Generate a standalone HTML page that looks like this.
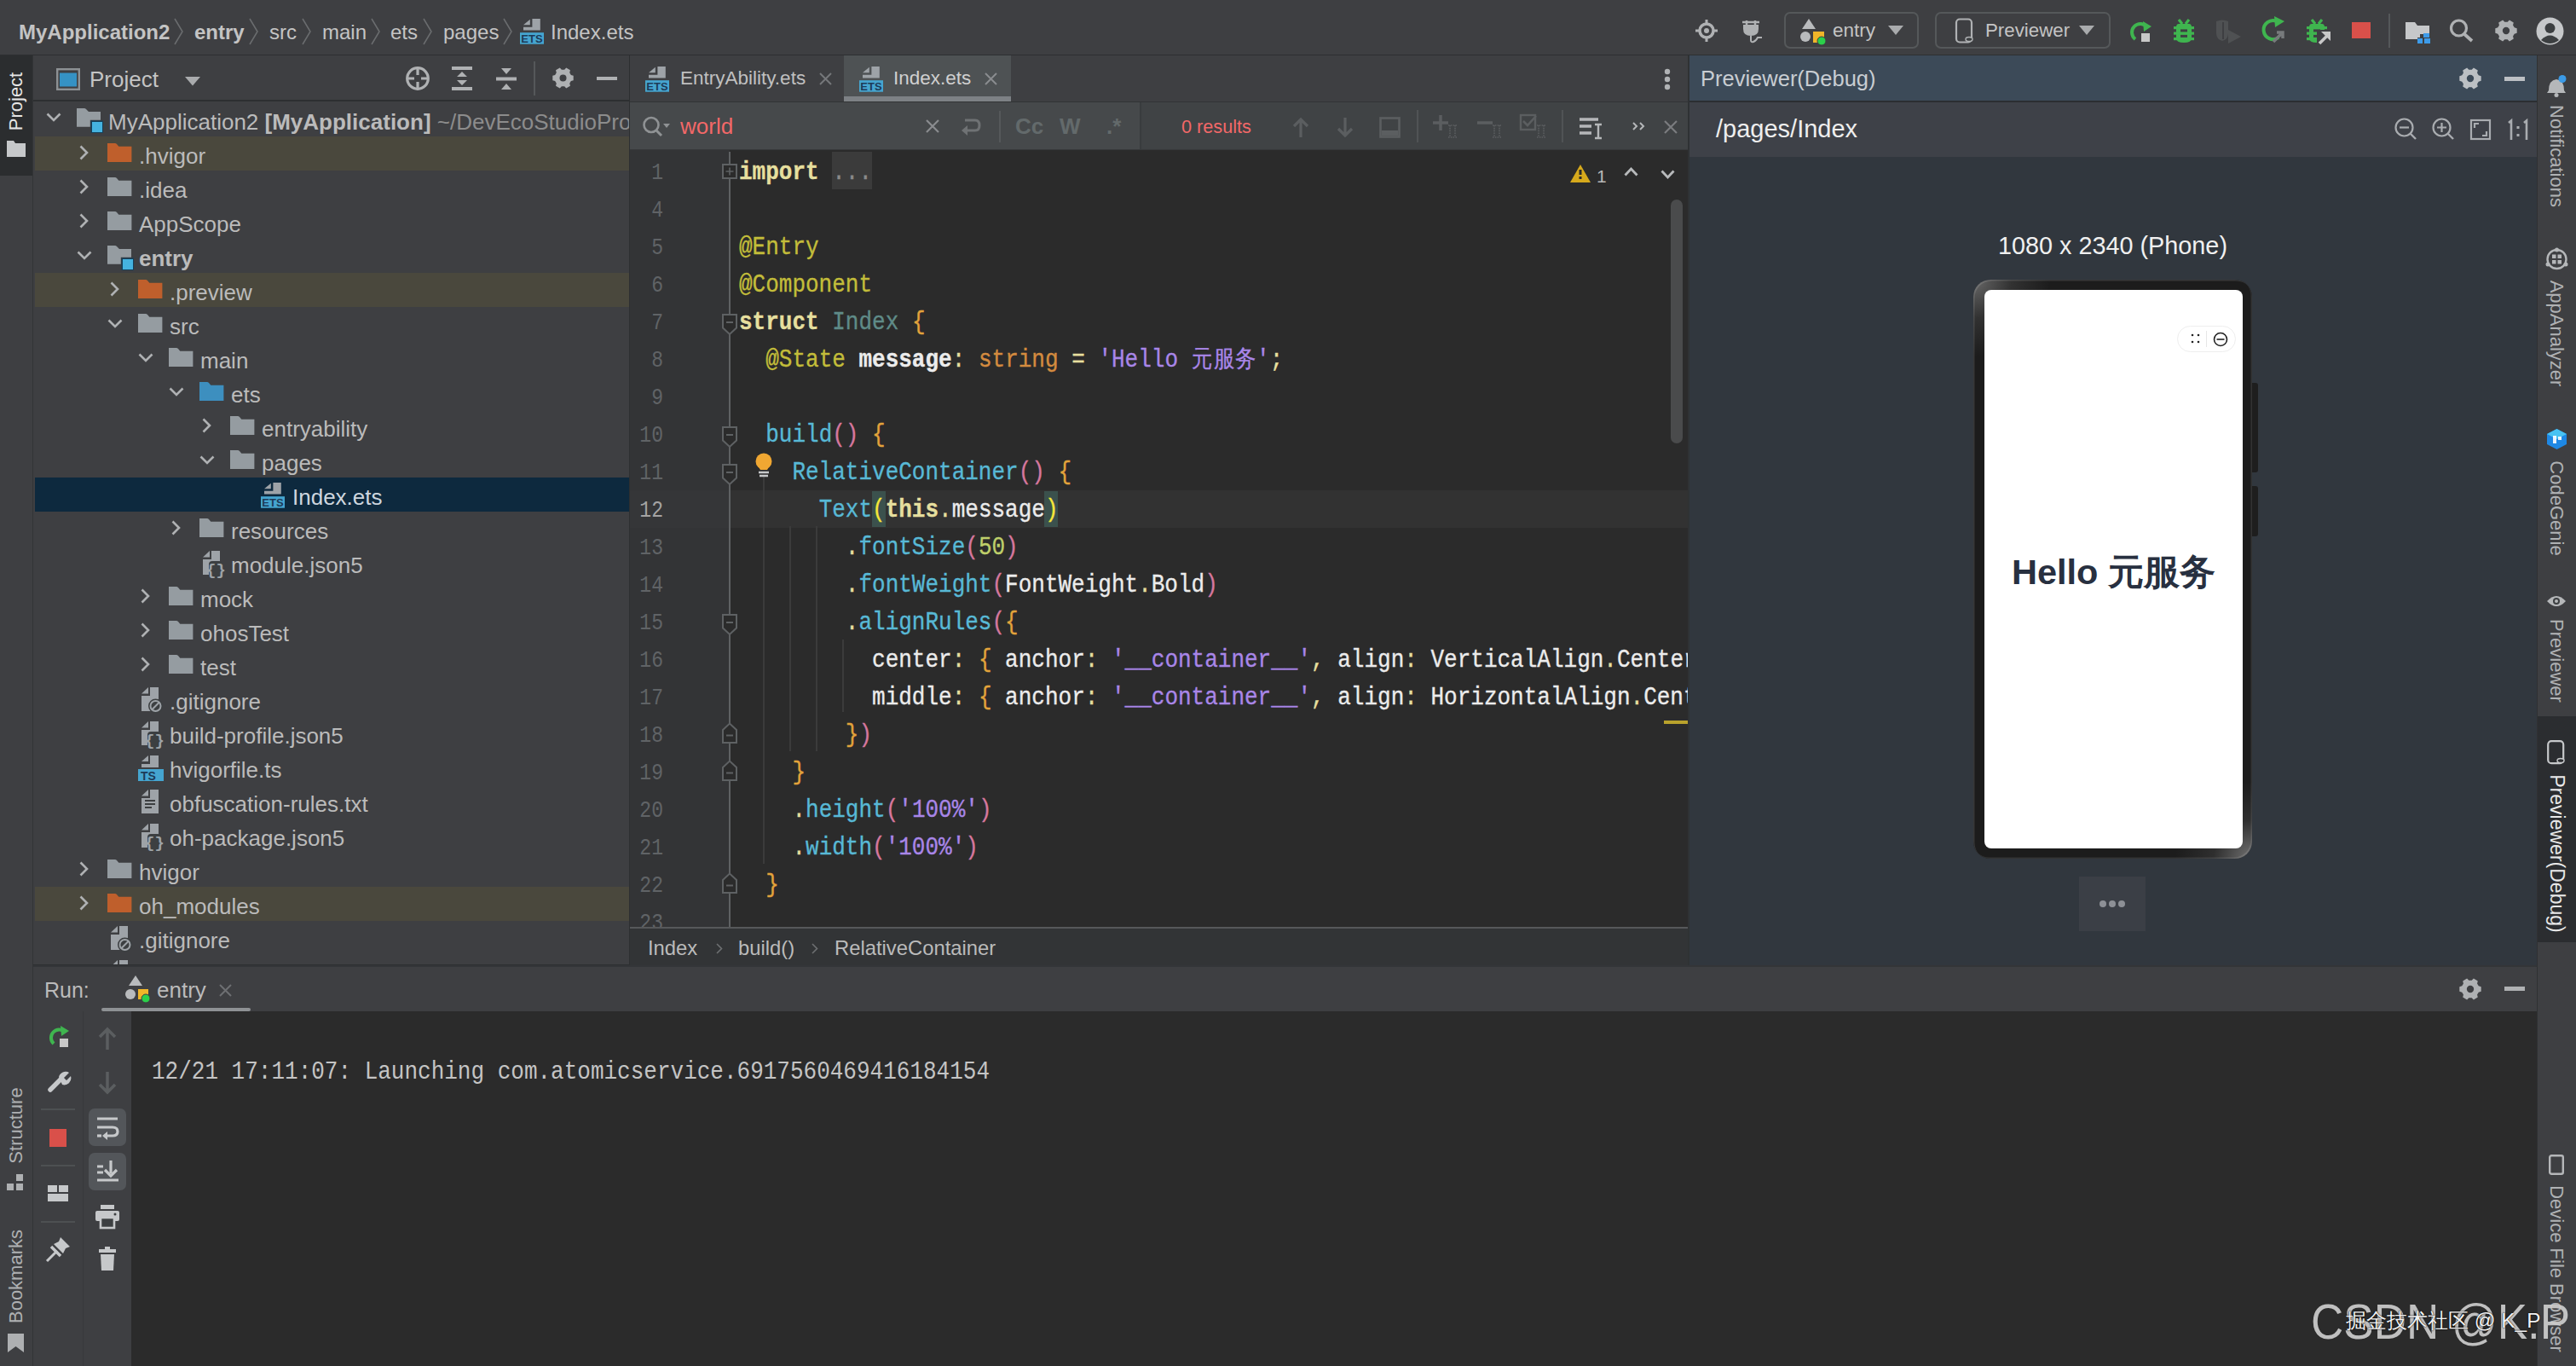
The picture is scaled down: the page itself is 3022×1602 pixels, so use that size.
<!DOCTYPE html><html><head><meta charset="utf-8"><style>html,body{margin:0;padding:0;width:3022px;height:1602px;overflow:hidden;background:#3c3f41}div{box-sizing:border-box}</style></head><body>
<div style="position:absolute;left:0px;top:0px;width:3022px;height:64px;background:#3e3f42;"></div>
<div style="position:absolute;left:0px;top:64px;width:3022px;height:2px;background:#2d2f31;"></div>
<div style="position:absolute;left:22px;top:25.68px;font-family:'Liberation Sans', sans-serif;font-size:24px;line-height:24px;color:#c4c4c4;font-weight:700;white-space:pre;">MyApplication2</div>
<div style="position:absolute;left:228px;top:25.68px;font-family:'Liberation Sans', sans-serif;font-size:24px;line-height:24px;color:#c4c4c4;font-weight:700;white-space:pre;">entry</div>
<div style="position:absolute;left:316px;top:25.68px;font-family:'Liberation Sans', sans-serif;font-size:24px;line-height:24px;color:#c4c4c4;font-weight:400;white-space:pre;">src</div>
<div style="position:absolute;left:378px;top:25.68px;font-family:'Liberation Sans', sans-serif;font-size:24px;line-height:24px;color:#c4c4c4;font-weight:400;white-space:pre;">main</div>
<div style="position:absolute;left:458px;top:25.68px;font-family:'Liberation Sans', sans-serif;font-size:24px;line-height:24px;color:#c4c4c4;font-weight:400;white-space:pre;">ets</div>
<div style="position:absolute;left:520px;top:25.68px;font-family:'Liberation Sans', sans-serif;font-size:24px;line-height:24px;color:#c4c4c4;font-weight:400;white-space:pre;">pages</div>
<div style="position:absolute;left:646px;top:25.68px;font-family:'Liberation Sans', sans-serif;font-size:24px;line-height:24px;color:#c4c4c4;font-weight:400;white-space:pre;">Index.ets</div>
<svg style="position:absolute;left:204px;top:21px;overflow:visible;" width="12" height="32" viewBox="0 0 12 32"><path d="M1 1 L10 16 L1 31" stroke="#6a6c6e" stroke-width="1.6" fill="none"/></svg>
<svg style="position:absolute;left:292px;top:21px;overflow:visible;" width="12" height="32" viewBox="0 0 12 32"><path d="M1 1 L10 16 L1 31" stroke="#6a6c6e" stroke-width="1.6" fill="none"/></svg>
<svg style="position:absolute;left:354px;top:21px;overflow:visible;" width="12" height="32" viewBox="0 0 12 32"><path d="M1 1 L10 16 L1 31" stroke="#6a6c6e" stroke-width="1.6" fill="none"/></svg>
<svg style="position:absolute;left:435px;top:21px;overflow:visible;" width="12" height="32" viewBox="0 0 12 32"><path d="M1 1 L10 16 L1 31" stroke="#6a6c6e" stroke-width="1.6" fill="none"/></svg>
<svg style="position:absolute;left:496px;top:21px;overflow:visible;" width="12" height="32" viewBox="0 0 12 32"><path d="M1 1 L10 16 L1 31" stroke="#6a6c6e" stroke-width="1.6" fill="none"/></svg>
<svg style="position:absolute;left:590px;top:21px;overflow:visible;" width="12" height="32" viewBox="0 0 12 32"><path d="M1 1 L10 16 L1 31" stroke="#6a6c6e" stroke-width="1.6" fill="none"/></svg>
<svg style="position:absolute;left:610px;top:22px;overflow:visible;" width="30" height="31" viewBox="0 0 30 31"><path d="M4 7.3 L11.8 0.7 V7.3 Z" fill="#9ea3a8"/><path d="M14.4 0 H23.8 V13.5 H4 V9.8 H14.4 Z" fill="#9ea3a8"/><rect x="0" y="16.2" width="28" height="13.5" fill="#45a5d0"/><text x="14" y="28.3" font-family="Liberation Sans" font-size="13" font-weight="700" fill="#1d3b58" text-anchor="middle">ETS</text></svg>
<svg style="position:absolute;left:1988px;top:22px;overflow:visible;" width="28" height="28" viewBox="0 0 28 28"><circle cx="14" cy="14" r="8" stroke="#afb1b3" stroke-width="3.5" fill="none"/><circle cx="14" cy="14" r="3" fill="#afb1b3"/><path d="M14 1 V6 M14 22 V27 M1 14 H6 M22 14 H27" stroke="#afb1b3" stroke-width="3"/></svg>
<svg style="position:absolute;left:2040px;top:22px;overflow:visible;" width="28" height="28" viewBox="0 0 28 28"><path d="M4 4 H24 M9 2 V8 M19 2 V8" stroke="#afb1b3" stroke-width="2.5"/><path d="M5 7 H23 V12 Q23 20 14 20 Q5 20 5 12 Z" fill="#afb1b3"/><path d="M14 20 V25 Q14 28 17 27 Q20 26 22 22 H27" stroke="#afb1b3" stroke-width="2" fill="none"/></svg>
<div style="position:absolute;left:2093px;top:14px;width:158px;height:43px;background:transparent;border:2px solid #55585a;border-radius:7px;"></div>
<svg style="position:absolute;left:2111px;top:20px;overflow:visible;" width="34" height="34" viewBox="0 0 34 34"><path d="M11 2 L19 14 L3 14 Z" fill="#b9bbbd"/><circle cx="7" cy="23" r="6" fill="#b9bbbd"/><rect x="16" y="17" width="13" height="13" fill="#f0b629"/><circle cx="26" cy="28" r="5" fill="#2bd04a" stroke="#3c3f41" stroke-width="1"/></svg>
<div style="position:absolute;left:2150px;top:24.95px;font-family:'Liberation Sans', sans-serif;font-size:22.5px;line-height:22.5px;color:#c4c4c4;font-weight:400;white-space:pre;">entry</div>
<svg style="position:absolute;left:2215px;top:30px;overflow:visible;" width="18" height="12" viewBox="0 0 18 12"><path d="M0 0 H18 L9 11 Z" fill="#a9abad"/></svg>
<div style="position:absolute;left:2270px;top:14px;width:206px;height:43px;background:transparent;border:2px solid #55585a;border-radius:7px;"></div>
<svg style="position:absolute;left:2293px;top:21px;overflow:visible;" width="24" height="30" viewBox="0 0 24 30"><rect x="2" y="1.5" width="18" height="27" rx="4" stroke="#afb1b3" stroke-width="2.2" fill="none"/><ellipse cx="17" cy="25" rx="4" ry="2.5" stroke="#afb1b3" stroke-width="1.4" fill="#3c3f41"/></svg>
<div style="position:absolute;left:2329px;top:25.12px;font-family:'Liberation Sans', sans-serif;font-size:22.3px;line-height:22.3px;color:#c4c4c4;font-weight:400;white-space:pre;">Previewer</div>
<svg style="position:absolute;left:2439px;top:30px;overflow:visible;" width="18" height="12" viewBox="0 0 18 12"><path d="M0 0 H18 L9 11 Z" fill="#a9abad"/></svg>
<svg style="position:absolute;left:2497px;top:22px;overflow:visible;" width="30" height="30" viewBox="0 0 30 30"><path d="M8 24 A10 10 0 1 1 22 10" stroke="#3fb54f" stroke-width="4" fill="none"/><path d="M17 3 L27 9 L18 15 Z" fill="#3fb54f"/><rect x="15" y="17" width="10" height="10" fill="#c8c8c8"/></svg>
<svg style="position:absolute;left:2550px;top:22px;overflow:visible;" width="30" height="34" viewBox="0 0 30 34"><path d="M6 1 L10 6 M18 1 L14 6" stroke="#3fb54f" stroke-width="3.2"/><path d="M6 6 H18 Q21 6 21 10 V23 Q21 28 12 28 Q3 28 3 23 V10 Q3 6 6 6 Z" fill="#3fb54f"/><rect x="0" y="9" width="24" height="3.2" fill="#3fb54f"/><rect x="0" y="15.5" width="24" height="3.2" fill="#3fb54f"/><rect x="0" y="22" width="24" height="3.2" fill="#3fb54f"/><rect x="8" y="12.4" width="8" height="3" fill="#3e3f42"/><rect x="8" y="18.9" width="8" height="3" fill="#3e3f42"/></svg>
<svg style="position:absolute;left:2599px;top:22px;overflow:visible;" width="34" height="30" viewBox="0 0 34 30"><path d="M1 3 Q8 0 15 3 V17 Q15 24 8 26 Q1 24 1 17 Z" fill="#4f5153"/><path d="M9 4 V24" stroke="#3e3f42" stroke-width="2"/><path d="M15 13 L30 21 L15 29 Z" fill="#4f5153"/></svg>
<svg style="position:absolute;left:2651px;top:19px;overflow:visible;" width="32" height="32" viewBox="0 0 32 32"><path d="M22 25 A11 11 0 1 1 20 6" stroke="#3fb54f" stroke-width="4" fill="none"/><path d="M17 0 L29 6 L18 13 Z" fill="#3fb54f"/><path d="M16 30 L27 19 M20 19 H27 V26" stroke="#777a7c" stroke-width="3.5" fill="none"/></svg>
<svg style="position:absolute;left:2706px;top:22px;overflow:visible;" width="30" height="34" viewBox="0 0 30 34"><path d="M6 1 L10 6 M18 1 L14 6" stroke="#3fb54f" stroke-width="3.2"/><path d="M6 6 H18 Q21 6 21 10 V23 Q21 28 12 28 Q3 28 3 23 V10 Q3 6 6 6 Z" fill="#3fb54f"/><rect x="0" y="9" width="24" height="3.2" fill="#3fb54f"/><rect x="0" y="15.5" width="24" height="3.2" fill="#3fb54f"/><rect x="0" y="22" width="24" height="3.2" fill="#3fb54f"/><rect x="8" y="12.4" width="8" height="3" fill="#3e3f42"/><rect x="8" y="18.9" width="8" height="3" fill="#3e3f42"/><path d="M12 13 H29 V31 H12 Z" fill="#3e3f42"/><path d="M15 29 L25 19" stroke="#c8c8c8" stroke-width="3.6"/><path d="M17 15 H28 V26 Z" fill="#c8c8c8"/></svg>
<div style="position:absolute;left:2759px;top:26px;width:22px;height:19px;background:#d9504a;"></div>
<div style="position:absolute;left:2802px;top:16px;width:2px;height:40px;background:#55585a;"></div>
<svg style="position:absolute;left:2822px;top:26px;overflow:visible;" width="30" height="25" viewBox="0 0 30 25"><path d="M0 0 H11 L14 4 H28 V18 H14 V20 H0 Z" fill="#c6c8ca"/><rect x="17" y="14" width="13" height="11" fill="#3c3f41"/><rect x="21" y="13" width="7" height="5" fill="#3d9be9"/><rect x="14" y="19" width="6" height="6" fill="#3d9be9"/><rect x="22" y="19" width="7" height="6" fill="#3d9be9"/></svg>
<svg style="position:absolute;left:2873px;top:22px;overflow:visible;" width="30" height="28" viewBox="0 0 30 28"><circle cx="11.5" cy="11" r="9" stroke="#afb1b3" stroke-width="3.2" fill="none"/><path d="M18 18 L27 26" stroke="#afb1b3" stroke-width="3.8"/></svg>
<svg style="position:absolute;left:2927px;top:23px;overflow:visible;" width="26" height="26" viewBox="0 0 26 26"><path d="M22.73 9.34 L25.69 10.16 L25.69 15.84 L22.73 16.66 L21.04 19.60 L21.80 22.57 L16.89 25.41 L14.69 23.26 L11.31 23.26 L9.11 25.41 L4.20 22.57 L4.96 19.60 L3.27 16.66 L0.31 15.84 L0.31 10.16 L3.27 9.34 L4.96 6.40 L4.20 3.43 L9.11 0.59 L11.31 2.74 L14.69 2.74 L16.89 0.59 L21.80 3.43 L21.04 6.40 Z" fill="#afb1b3"/><circle cx="13.0" cy="13.0" r="4.16" fill="#3e3f42"/></svg>
<svg style="position:absolute;left:2975px;top:20px;overflow:visible;" width="33" height="33" viewBox="0 0 33 33"><circle cx="16.5" cy="16.5" r="16" fill="#c6c8ca"/><circle cx="16.5" cy="13" r="6" fill="#3c3f41"/><path d="M6 27 Q16.5 16 27 27 Q22 31 16.5 31 Q11 31 6 27 Z" fill="#3c3f41"/></svg>
<div style="position:absolute;left:0px;top:65px;width:38px;height:1537px;background:#3e3f42;"></div>
<div style="position:absolute;left:38px;top:65px;width:1px;height:1537px;background:#323436;"></div>
<div style="position:absolute;left:0px;top:65px;width:38px;height:141px;background:#2b2d2f;"></div>
<div style="position:absolute;left:19px;top:119px;transform:translate(-50%,-50%) rotate(-90deg);font-family:'Liberation Sans', sans-serif;font-size:22px;line-height:22px;color:#e6e6e6;font-weight:400;white-space:pre">Project</div>
<svg style="position:absolute;left:8px;top:165px;overflow:visible;" width="22" height="19" viewBox="0 0 22 19"><path d="M0 0 H8 L10 3 H22 V19 H0 Z" fill="#c6c8ca"/></svg>
<div style="position:absolute;left:19px;top:1320px;transform:translate(-50%,-50%) rotate(-90deg);font-family:'Liberation Sans', sans-serif;font-size:22px;line-height:22px;color:#aeb0b2;font-weight:400;white-space:pre">Structure</div>
<svg style="position:absolute;left:8px;top:1377px;overflow:visible;" width="22" height="20" viewBox="0 0 22 20"><rect x="0" y="11" width="8" height="8" fill="#aeb0b2"/><rect x="11" y="11" width="8" height="8" fill="#aeb0b2"/><rect x="11" y="0" width="8" height="8" fill="#aeb0b2"/></svg>
<div style="position:absolute;left:19px;top:1497px;transform:translate(-50%,-50%) rotate(-90deg);font-family:'Liberation Sans', sans-serif;font-size:22px;line-height:22px;color:#aeb0b2;font-weight:400;white-space:pre">Bookmarks</div>
<svg style="position:absolute;left:9px;top:1564px;overflow:visible;" width="19" height="22" viewBox="0 0 19 22"><path d="M0 0 H19 V22 L9.5 15 L0 22 Z" fill="#aeb0b2"/></svg>
<div style="position:absolute;left:39px;top:65px;width:699px;height:1068px;background:#3e3f42;"></div>
<svg style="position:absolute;left:66px;top:80px;overflow:visible;" width="28" height="26" viewBox="0 0 28 26"><rect x="1.2" y="1.2" width="25.6" height="23.6" stroke="#8d9194" stroke-width="2.4" fill="none"/><rect x="4" y="5.5" width="20" height="16" fill="#3592c4"/></svg>
<div style="position:absolute;left:105px;top:79.99px;font-family:'Liberation Sans', sans-serif;font-size:26px;line-height:26px;color:#c4c4c4;font-weight:400;white-space:pre;">Project</div>
<svg style="position:absolute;left:217px;top:90px;overflow:visible;" width="18" height="11" viewBox="0 0 18 11"><path d="M0 0 H18 L9 10.5 Z" fill="#a9abad"/></svg>
<svg style="position:absolute;left:476px;top:78px;overflow:visible;" width="28" height="28" viewBox="0 0 28 28"><circle cx="14" cy="14" r="12.3" stroke="#afb1b3" stroke-width="3.2" fill="none"/><path d="M14 2 V10 M14 18 V26 M2 14 H10 M18 14 H26" stroke="#afb1b3" stroke-width="3.2"/></svg>
<svg style="position:absolute;left:530px;top:78px;overflow:visible;" width="24" height="28" viewBox="0 0 24 28"><rect x="0" y="0" width="24" height="4" fill="#afb1b3"/><rect x="0" y="24" width="24" height="4" fill="#afb1b3"/><path d="M6 12 L12 6 L18 12 Z M6 16 L12 22 L18 16 Z" fill="#afb1b3"/></svg>
<svg style="position:absolute;left:582px;top:80px;overflow:visible;" width="24" height="25" viewBox="0 0 24 25"><rect x="0" y="10.5" width="24" height="4" fill="#afb1b3"/><path d="M6 0 H18 L12 7 Z M6 25 H18 L12 18 Z" fill="#afb1b3"/></svg>
<div style="position:absolute;left:626px;top:72px;width:2px;height:40px;background:#55585a;"></div>
<svg style="position:absolute;left:648px;top:79px;overflow:visible;" width="25" height="25" viewBox="0 0 25 25"><path d="M21.86 8.98 L24.70 9.77 L24.70 15.23 L21.86 16.02 L20.23 18.84 L20.96 21.70 L16.24 24.43 L14.13 22.37 L10.87 22.37 L8.76 24.43 L4.04 21.70 L4.77 18.84 L3.14 16.02 L0.30 15.23 L0.30 9.77 L3.14 8.98 L4.77 6.16 L4.04 3.30 L8.76 0.57 L10.87 2.63 L14.13 2.63 L16.24 0.57 L20.96 3.30 L20.23 6.16 Z" fill="#afb1b3"/><circle cx="12.5" cy="12.5" r="4.00" fill="#3e3f42"/></svg>
<div style="position:absolute;left:700px;top:90px;width:24px;height:4px;background:#afb1b3;"></div>
<div style="position:absolute;left:39px;top:117px;width:699px;height:2px;background:#2d2f31;"></div>
<div style="position:absolute;left:39px;top:119px;width:699px;height:1013px;overflow:hidden">
<svg style="position:absolute;left:15px;top:13px" width="18" height="11"><path d="M1.5 1.5 L9 9 L16.5 1.5" stroke="#afb1b3" stroke-width="2.6" fill="none"/></svg>
<svg style="position:absolute;left:51px;top:8px" width="32" height="30"><path d="M0 0 H9 Q10 0 11 1 L14 4 H28 V13.7 H15.8 V21.8 H0 Z" fill="#959ca1"/><rect x="16.5" y="14.5" width="14.5" height="14.5" fill="#15405a"/><rect x="18" y="16" width="12" height="12" fill="#45b3e0"/></svg>
<div style="position:absolute;left:88px;top:10.99px;font-family:'Liberation Sans', sans-serif;font-size:26px;line-height:26px;white-space:pre;color:#bbbbbb"><span style="font-weight:400;color:#bbbbbb">MyApplication2 </span><span style="font-weight:700;color:#bbbbbb">[MyApplication]</span><span style="font-weight:400;color:#8c8c8c"> ~/DevEcoStudioProjects/MyApplication2</span></div>
<div style="position:absolute;left:2px;top:41px;width:697px;height:40px;background:#4a483d"></div>
<svg style="position:absolute;left:54px;top:51px" width="11" height="18"><path d="M1.5 1.5 L9 9 L1.5 16.5" stroke="#afb1b3" stroke-width="2.6" fill="none"/></svg>
<svg style="position:absolute;left:87px;top:49px" width="30" height="24"><path d="M0 0 H9 Q10 0 11 1 L13.3 3.8 H28.4 V22 H0 Z" fill="#bf5f2c"/></svg>
<div style="position:absolute;left:124px;top:50.99px;font-family:'Liberation Sans', sans-serif;font-size:26px;line-height:26px;white-space:pre;color:#bbbbbb"><span style="font-weight:400;color:#bbbbbb">.hvigor</span></div>
<svg style="position:absolute;left:54px;top:91px" width="11" height="18"><path d="M1.5 1.5 L9 9 L1.5 16.5" stroke="#afb1b3" stroke-width="2.6" fill="none"/></svg>
<svg style="position:absolute;left:87px;top:89px" width="30" height="24"><path d="M0 0 H9 Q10 0 11 1 L13.3 3.8 H28.4 V22 H0 Z" fill="#959ca1"/></svg>
<div style="position:absolute;left:124px;top:90.99px;font-family:'Liberation Sans', sans-serif;font-size:26px;line-height:26px;white-space:pre;color:#bbbbbb"><span style="font-weight:400;color:#bbbbbb">.idea</span></div>
<svg style="position:absolute;left:54px;top:131px" width="11" height="18"><path d="M1.5 1.5 L9 9 L1.5 16.5" stroke="#afb1b3" stroke-width="2.6" fill="none"/></svg>
<svg style="position:absolute;left:87px;top:129px" width="30" height="24"><path d="M0 0 H9 Q10 0 11 1 L13.3 3.8 H28.4 V22 H0 Z" fill="#959ca1"/></svg>
<div style="position:absolute;left:124px;top:130.99px;font-family:'Liberation Sans', sans-serif;font-size:26px;line-height:26px;white-space:pre;color:#bbbbbb"><span style="font-weight:400;color:#bbbbbb">AppScope</span></div>
<svg style="position:absolute;left:51px;top:175px" width="18" height="11"><path d="M1.5 1.5 L9 9 L16.5 1.5" stroke="#afb1b3" stroke-width="2.6" fill="none"/></svg>
<svg style="position:absolute;left:87px;top:169px" width="32" height="30"><path d="M0 0 H9 Q10 0 11 1 L14 4 H28 V13.7 H15.8 V21.8 H0 Z" fill="#959ca1"/><rect x="16.5" y="14.5" width="14.5" height="14.5" fill="#15405a"/><rect x="18" y="16" width="12" height="12" fill="#45b3e0"/></svg>
<div style="position:absolute;left:124px;top:170.99px;font-family:'Liberation Sans', sans-serif;font-size:26px;line-height:26px;white-space:pre;color:#bbbbbb"><span style="font-weight:700;color:#bbbbbb">entry</span></div>
<div style="position:absolute;left:2px;top:201px;width:697px;height:40px;background:#4a483d"></div>
<svg style="position:absolute;left:90px;top:211px" width="11" height="18"><path d="M1.5 1.5 L9 9 L1.5 16.5" stroke="#afb1b3" stroke-width="2.6" fill="none"/></svg>
<svg style="position:absolute;left:123px;top:209px" width="30" height="24"><path d="M0 0 H9 Q10 0 11 1 L13.3 3.8 H28.4 V22 H0 Z" fill="#bf5f2c"/></svg>
<div style="position:absolute;left:160px;top:210.99px;font-family:'Liberation Sans', sans-serif;font-size:26px;line-height:26px;white-space:pre;color:#bbbbbb"><span style="font-weight:400;color:#bbbbbb">.preview</span></div>
<svg style="position:absolute;left:87px;top:255px" width="18" height="11"><path d="M1.5 1.5 L9 9 L16.5 1.5" stroke="#afb1b3" stroke-width="2.6" fill="none"/></svg>
<svg style="position:absolute;left:123px;top:249px" width="30" height="24"><path d="M0 0 H9 Q10 0 11 1 L13.3 3.8 H28.4 V22 H0 Z" fill="#959ca1"/></svg>
<div style="position:absolute;left:160px;top:250.99px;font-family:'Liberation Sans', sans-serif;font-size:26px;line-height:26px;white-space:pre;color:#bbbbbb"><span style="font-weight:400;color:#bbbbbb">src</span></div>
<svg style="position:absolute;left:123px;top:295px" width="18" height="11"><path d="M1.5 1.5 L9 9 L16.5 1.5" stroke="#afb1b3" stroke-width="2.6" fill="none"/></svg>
<svg style="position:absolute;left:159px;top:289px" width="30" height="24"><path d="M0 0 H9 Q10 0 11 1 L13.3 3.8 H28.4 V22 H0 Z" fill="#959ca1"/></svg>
<div style="position:absolute;left:196px;top:290.99px;font-family:'Liberation Sans', sans-serif;font-size:26px;line-height:26px;white-space:pre;color:#bbbbbb"><span style="font-weight:400;color:#bbbbbb">main</span></div>
<svg style="position:absolute;left:159px;top:335px" width="18" height="11"><path d="M1.5 1.5 L9 9 L16.5 1.5" stroke="#afb1b3" stroke-width="2.6" fill="none"/></svg>
<svg style="position:absolute;left:195px;top:329px" width="30" height="24"><path d="M0 0 H9 Q10 0 11 1 L13.3 3.8 H28.4 V22 H0 Z" fill="#3d8fbf"/></svg>
<div style="position:absolute;left:232px;top:330.99px;font-family:'Liberation Sans', sans-serif;font-size:26px;line-height:26px;white-space:pre;color:#bbbbbb"><span style="font-weight:400;color:#bbbbbb">ets</span></div>
<svg style="position:absolute;left:198px;top:371px" width="11" height="18"><path d="M1.5 1.5 L9 9 L1.5 16.5" stroke="#afb1b3" stroke-width="2.6" fill="none"/></svg>
<svg style="position:absolute;left:231px;top:369px" width="30" height="24"><path d="M0 0 H9 Q10 0 11 1 L13.3 3.8 H28.4 V22 H0 Z" fill="#959ca1"/></svg>
<div style="position:absolute;left:268px;top:370.99px;font-family:'Liberation Sans', sans-serif;font-size:26px;line-height:26px;white-space:pre;color:#bbbbbb"><span style="font-weight:400;color:#bbbbbb">entryability</span></div>
<svg style="position:absolute;left:195px;top:415px" width="18" height="11"><path d="M1.5 1.5 L9 9 L16.5 1.5" stroke="#afb1b3" stroke-width="2.6" fill="none"/></svg>
<svg style="position:absolute;left:231px;top:409px" width="30" height="24"><path d="M0 0 H9 Q10 0 11 1 L13.3 3.8 H28.4 V22 H0 Z" fill="#959ca1"/></svg>
<div style="position:absolute;left:268px;top:410.99px;font-family:'Liberation Sans', sans-serif;font-size:26px;line-height:26px;white-space:pre;color:#bbbbbb"><span style="font-weight:400;color:#bbbbbb">pages</span></div>
<div style="position:absolute;left:2px;top:441px;width:697px;height:40px;background:#0d293e"></div>
<svg style="position:absolute;left:267px;top:447px" width="30" height="31"><path d="M4 7.3 L11.8 0.7 V7.3 Z" fill="#9ea3a8"/><path d="M14.4 0 H23.8 V13.5 H4 V9.8 H14.4 Z" fill="#9ea3a8"/><rect x="0" y="16.2" width="28" height="13.5" fill="#45a5d0"/><text x="14" y="28.3" font-family="Liberation Sans" font-size="13" font-weight="700" fill="#1d3b58" text-anchor="middle">ETS</text></svg>
<div style="position:absolute;left:304px;top:450.99px;font-family:'Liberation Sans', sans-serif;font-size:26px;line-height:26px;white-space:pre;color:#bbbbbb"><span style="font-weight:400;color:#cdd6df">Index.ets</span></div>
<svg style="position:absolute;left:162px;top:491px" width="11" height="18"><path d="M1.5 1.5 L9 9 L1.5 16.5" stroke="#afb1b3" stroke-width="2.6" fill="none"/></svg>
<svg style="position:absolute;left:195px;top:489px" width="30" height="24"><path d="M0 0 H9 Q10 0 11 1 L13.3 3.8 H28.4 V22 H0 Z" fill="#959ca1"/></svg>
<div style="position:absolute;left:232px;top:490.99px;font-family:'Liberation Sans', sans-serif;font-size:26px;line-height:26px;white-space:pre;color:#bbbbbb"><span style="font-weight:400;color:#bbbbbb">resources</span></div>
<svg style="position:absolute;left:195px;top:527px" width="32" height="32"><path d="M4 7.5 L12 0 V7.5 Z" fill="#9ea3a8"/><path d="M14 0 H24 V28 H4 V10 H14 Z" fill="#9ea3a8"/><rect x="11" y="12" width="16" height="20" rx="4" fill="#3c3f41"/><text x="19.5" y="28" font-family="Liberation Mono" font-size="19" font-weight="700" fill="#9ea3a8" text-anchor="middle">{}</text></svg>
<div style="position:absolute;left:232px;top:530.99px;font-family:'Liberation Sans', sans-serif;font-size:26px;line-height:26px;white-space:pre;color:#bbbbbb"><span style="font-weight:400;color:#bbbbbb">module.json5</span></div>
<svg style="position:absolute;left:126px;top:571px" width="11" height="18"><path d="M1.5 1.5 L9 9 L1.5 16.5" stroke="#afb1b3" stroke-width="2.6" fill="none"/></svg>
<svg style="position:absolute;left:159px;top:569px" width="30" height="24"><path d="M0 0 H9 Q10 0 11 1 L13.3 3.8 H28.4 V22 H0 Z" fill="#959ca1"/></svg>
<div style="position:absolute;left:196px;top:570.99px;font-family:'Liberation Sans', sans-serif;font-size:26px;line-height:26px;white-space:pre;color:#bbbbbb"><span style="font-weight:400;color:#bbbbbb">mock</span></div>
<svg style="position:absolute;left:126px;top:611px" width="11" height="18"><path d="M1.5 1.5 L9 9 L1.5 16.5" stroke="#afb1b3" stroke-width="2.6" fill="none"/></svg>
<svg style="position:absolute;left:159px;top:609px" width="30" height="24"><path d="M0 0 H9 Q10 0 11 1 L13.3 3.8 H28.4 V22 H0 Z" fill="#959ca1"/></svg>
<div style="position:absolute;left:196px;top:610.99px;font-family:'Liberation Sans', sans-serif;font-size:26px;line-height:26px;white-space:pre;color:#bbbbbb"><span style="font-weight:400;color:#bbbbbb">ohosTest</span></div>
<svg style="position:absolute;left:126px;top:651px" width="11" height="18"><path d="M1.5 1.5 L9 9 L1.5 16.5" stroke="#afb1b3" stroke-width="2.6" fill="none"/></svg>
<svg style="position:absolute;left:159px;top:649px" width="30" height="24"><path d="M0 0 H9 Q10 0 11 1 L13.3 3.8 H28.4 V22 H0 Z" fill="#959ca1"/></svg>
<div style="position:absolute;left:196px;top:650.99px;font-family:'Liberation Sans', sans-serif;font-size:26px;line-height:26px;white-space:pre;color:#bbbbbb"><span style="font-weight:400;color:#bbbbbb">test</span></div>
<svg style="position:absolute;left:123px;top:687px" width="32" height="32"><path d="M4 7.5 L12 0 V7.5 Z" fill="#9ea3a8"/><path d="M14 0 H24 V28 H4 V10 H14 Z" fill="#9ea3a8"/><circle cx="20.5" cy="22" r="8.5" fill="#3c3f41"/><circle cx="20.5" cy="22" r="6" stroke="#9ea3a8" stroke-width="2" fill="none"/><path d="M16.5 26 L24.5 18" stroke="#9ea3a8" stroke-width="2"/></svg>
<div style="position:absolute;left:160px;top:690.99px;font-family:'Liberation Sans', sans-serif;font-size:26px;line-height:26px;white-space:pre;color:#bbbbbb"><span style="font-weight:400;color:#bbbbbb">.gitignore</span></div>
<svg style="position:absolute;left:123px;top:727px" width="32" height="32"><path d="M4 7.5 L12 0 V7.5 Z" fill="#9ea3a8"/><path d="M14 0 H24 V28 H4 V10 H14 Z" fill="#9ea3a8"/><rect x="11" y="12" width="16" height="20" rx="4" fill="#3c3f41"/><text x="19.5" y="28" font-family="Liberation Mono" font-size="19" font-weight="700" fill="#9ea3a8" text-anchor="middle">{}</text></svg>
<div style="position:absolute;left:160px;top:730.99px;font-family:'Liberation Sans', sans-serif;font-size:26px;line-height:26px;white-space:pre;color:#bbbbbb"><span style="font-weight:400;color:#bbbbbb">build-profile.json5</span></div>
<svg style="position:absolute;left:123px;top:767px" width="31" height="31"><path d="M4 7 L12 0 V7 Z" fill="#9ea3a8"/><path d="M14 0 H24 V14 H4 V10 H14 Z" fill="#9ea3a8"/><rect x="0" y="16" width="30" height="14" fill="#45a5d0"/><text x="3" y="28.5" font-family="Liberation Sans" font-size="14" font-weight="700" fill="#1d3b58">TS</text></svg>
<div style="position:absolute;left:160px;top:770.99px;font-family:'Liberation Sans', sans-serif;font-size:26px;line-height:26px;white-space:pre;color:#bbbbbb"><span style="font-weight:400;color:#bbbbbb">hvigorfile.ts</span></div>
<svg style="position:absolute;left:123px;top:807px" width="32" height="32"><path d="M4 7.5 L12 0 V7.5 Z" fill="#9ea3a8"/><path d="M14 0 H24 V28 H4 V10 H14 Z" fill="#9ea3a8"/><path d="M8 13 H20 M8 17 H20 M8 21 H16" stroke="#3c3f41" stroke-width="2.2"/></svg>
<div style="position:absolute;left:160px;top:810.99px;font-family:'Liberation Sans', sans-serif;font-size:26px;line-height:26px;white-space:pre;color:#bbbbbb"><span style="font-weight:400;color:#bbbbbb">obfuscation-rules.txt</span></div>
<svg style="position:absolute;left:123px;top:847px" width="32" height="32"><path d="M4 7.5 L12 0 V7.5 Z" fill="#9ea3a8"/><path d="M14 0 H24 V28 H4 V10 H14 Z" fill="#9ea3a8"/><rect x="11" y="12" width="16" height="20" rx="4" fill="#3c3f41"/><text x="19.5" y="28" font-family="Liberation Mono" font-size="19" font-weight="700" fill="#9ea3a8" text-anchor="middle">{}</text></svg>
<div style="position:absolute;left:160px;top:850.99px;font-family:'Liberation Sans', sans-serif;font-size:26px;line-height:26px;white-space:pre;color:#bbbbbb"><span style="font-weight:400;color:#bbbbbb">oh-package.json5</span></div>
<svg style="position:absolute;left:54px;top:891px" width="11" height="18"><path d="M1.5 1.5 L9 9 L1.5 16.5" stroke="#afb1b3" stroke-width="2.6" fill="none"/></svg>
<svg style="position:absolute;left:87px;top:889px" width="30" height="24"><path d="M0 0 H9 Q10 0 11 1 L13.3 3.8 H28.4 V22 H0 Z" fill="#959ca1"/></svg>
<div style="position:absolute;left:124px;top:890.99px;font-family:'Liberation Sans', sans-serif;font-size:26px;line-height:26px;white-space:pre;color:#bbbbbb"><span style="font-weight:400;color:#bbbbbb">hvigor</span></div>
<div style="position:absolute;left:2px;top:921px;width:697px;height:40px;background:#4a483d"></div>
<svg style="position:absolute;left:54px;top:931px" width="11" height="18"><path d="M1.5 1.5 L9 9 L1.5 16.5" stroke="#afb1b3" stroke-width="2.6" fill="none"/></svg>
<svg style="position:absolute;left:87px;top:929px" width="30" height="24"><path d="M0 0 H9 Q10 0 11 1 L13.3 3.8 H28.4 V22 H0 Z" fill="#bf5f2c"/></svg>
<div style="position:absolute;left:124px;top:930.99px;font-family:'Liberation Sans', sans-serif;font-size:26px;line-height:26px;white-space:pre;color:#bbbbbb"><span style="font-weight:400;color:#bbbbbb">oh_modules</span></div>
<svg style="position:absolute;left:87px;top:967px" width="32" height="32"><path d="M4 7.5 L12 0 V7.5 Z" fill="#9ea3a8"/><path d="M14 0 H24 V28 H4 V10 H14 Z" fill="#9ea3a8"/><circle cx="20.5" cy="22" r="8.5" fill="#3c3f41"/><circle cx="20.5" cy="22" r="6" stroke="#9ea3a8" stroke-width="2" fill="none"/><path d="M16.5 26 L24.5 18" stroke="#9ea3a8" stroke-width="2"/></svg>
<div style="position:absolute;left:124px;top:970.99px;font-family:'Liberation Sans', sans-serif;font-size:26px;line-height:26px;white-space:pre;color:#bbbbbb"><span style="font-weight:400;color:#bbbbbb">.gitignore</span></div>
<svg style="position:absolute;left:87px;top:1007px" width="32" height="32"><path d="M4 7.5 L12 0 V7.5 Z" fill="#9ea3a8"/><path d="M14 0 H24 V28 H4 V10 H14 Z" fill="#9ea3a8"/><path d="M8 13 H20 M8 17 H20 M8 21 H16" stroke="#3c3f41" stroke-width="2.2"/></svg>
<div style="position:absolute;left:124px;top:1010.99px;font-family:'Liberation Sans', sans-serif;font-size:26px;line-height:26px;white-space:pre;color:#bbbbbb"><span style="font-weight:400;color:#bbbbbb"></span></div>
</div>
<div style="position:absolute;left:39px;top:1131px;width:699px;height:2px;background:#2d2f31;"></div>
<div style="position:absolute;left:738px;top:65px;width:1px;height:1068px;background:#2d2f31;"></div>
<div style="position:absolute;left:739px;top:65px;width:1241px;height:55px;background:#3e3f42;"></div>
<svg style="position:absolute;left:757px;top:78px;overflow:visible;" width="30" height="31" viewBox="0 0 30 31"><path d="M4 7.3 L11.8 0.7 V7.3 Z" fill="#9ea3a8"/><path d="M14.4 0 H23.8 V13.5 H4 V9.8 H14.4 Z" fill="#9ea3a8"/><rect x="0" y="16.2" width="28" height="13.5" fill="#45a5d0"/><text x="14" y="28.3" font-family="Liberation Sans" font-size="13" font-weight="700" fill="#1d3b58" text-anchor="middle">ETS</text></svg>
<div style="position:absolute;left:798px;top:80.95px;font-family:'Liberation Sans', sans-serif;font-size:22.5px;line-height:22.5px;color:#c0c0c0;font-weight:400;white-space:pre;">EntryAbility.ets</div>
<svg style="position:absolute;left:961px;top:85px;overflow:visible;" width="15" height="15" viewBox="0 0 15 15"><path d="M1 1 L14 14 M14 1 L1 14" stroke="#75777a" stroke-width="2"/></svg>
<div style="position:absolute;left:990px;top:65px;width:196px;height:48px;background:#4e5254;"></div>
<div style="position:absolute;left:990px;top:113px;width:196px;height:6px;background:#7d8185;"></div>
<svg style="position:absolute;left:1008px;top:78px;overflow:visible;" width="30" height="31" viewBox="0 0 30 31"><path d="M4 7.3 L11.8 0.7 V7.3 Z" fill="#9ea3a8"/><path d="M14.4 0 H23.8 V13.5 H4 V9.8 H14.4 Z" fill="#9ea3a8"/><rect x="0" y="16.2" width="28" height="13.5" fill="#45a5d0"/><text x="14" y="28.3" font-family="Liberation Sans" font-size="13" font-weight="700" fill="#1d3b58" text-anchor="middle">ETS</text></svg>
<div style="position:absolute;left:1048px;top:80.95px;font-family:'Liberation Sans', sans-serif;font-size:22.5px;line-height:22.5px;color:#d0d0d0;font-weight:400;white-space:pre;">Index.ets</div>
<svg style="position:absolute;left:1155px;top:85px;overflow:visible;" width="15" height="15" viewBox="0 0 15 15"><path d="M1 1 L14 14 M14 1 L1 14" stroke="#8a8c8f" stroke-width="2"/></svg>
<svg style="position:absolute;left:1951px;top:80px;overflow:visible;" width="10" height="26" viewBox="0 0 10 26"><circle cx="5" cy="4" r="3.2" fill="#b0b2b4"/><circle cx="5" cy="13" r="3.2" fill="#b0b2b4"/><circle cx="5" cy="22" r="3.2" fill="#b0b2b4"/></svg>
<div style="position:absolute;left:739px;top:119px;width:1241px;height:1px;background:#323436;"></div>
<div style="position:absolute;left:739px;top:120px;width:1241px;height:56px;background:#404345;"></div>
<div style="position:absolute;left:739px;top:120px;width:599px;height:56px;background:#46494b;"></div>
<svg style="position:absolute;left:753px;top:136px;overflow:visible;" width="34" height="26" viewBox="0 0 34 26"><circle cx="11" cy="10.5" r="8.5" stroke="#8f9294" stroke-width="2.6" fill="none"/><path d="M17 17 L23 23" stroke="#8f9294" stroke-width="3"/><path d="M25 9 H33 L29 14 Z" fill="#8f9294"/></svg>
<div style="position:absolute;left:798px;top:134.99px;font-family:'Liberation Sans', sans-serif;font-size:26px;line-height:26px;color:#f26868;font-weight:400;white-space:pre;">world</div>
<svg style="position:absolute;left:1086px;top:140px;overflow:visible;" width="16" height="16" viewBox="0 0 16 16"><path d="M1 1 L15 15 M15 1 L1 15" stroke="#8a8c8f" stroke-width="2.2"/></svg>
<svg style="position:absolute;left:1126px;top:138px;overflow:visible;" width="25" height="22" viewBox="0 0 25 22"><path d="M6 3 H18 Q23 3 23 9 Q23 15 18 15 H6" stroke="#6f7274" stroke-width="3" fill="none"/><path d="M2 15 L9 9 V21 Z" fill="#6f7274"/></svg>
<div style="position:absolute;left:1172px;top:130px;width:2px;height:37px;background:#55585a;"></div>
<div style="position:absolute;left:1191px;top:134.99px;font-family:'Liberation Sans', sans-serif;font-size:26px;line-height:26px;color:#636a6b;font-weight:700;white-space:pre;">Cc</div>
<div style="position:absolute;left:1243px;top:134.99px;font-family:'Liberation Sans', sans-serif;font-size:26px;line-height:26px;color:#636a6b;font-weight:700;white-space:pre;">W</div>
<div style="position:absolute;left:1298px;top:134.99px;font-family:'Liberation Sans', sans-serif;font-size:26px;line-height:26px;color:#636a6b;font-weight:700;white-space:pre;">.*</div>
<div style="position:absolute;left:1337px;top:120px;width:2px;height:56px;background:#393c3e;"></div>
<div style="position:absolute;left:1386px;top:137.63px;font-family:'Liberation Sans', sans-serif;font-size:21.7px;line-height:21.7px;color:#f26868;font-weight:400;white-space:pre;">0 results</div>
<svg style="position:absolute;left:1516px;top:137px;overflow:visible;" width="20" height="25" viewBox="0 0 20 25"><path d="M10 24 V4 M2 11 L10 3 L18 11" stroke="#5b5e60" stroke-width="3.2" fill="none"/></svg>
<svg style="position:absolute;left:1568px;top:137px;overflow:visible;" width="20" height="25" viewBox="0 0 20 25"><path d="M10 1 V21 M2 14 L10 22 L18 14" stroke="#5b5e60" stroke-width="3.2" fill="none"/></svg>
<svg style="position:absolute;left:1618px;top:137px;overflow:visible;" width="25" height="25" viewBox="0 0 25 25"><rect x="1.5" y="1.5" width="22" height="22" stroke="#5b5e60" stroke-width="2.6" fill="none"/><rect x="3" y="16" width="19" height="6" fill="#5b5e60"/></svg>
<div style="position:absolute;left:1662px;top:129px;width:2px;height:38px;background:#505355;"></div>
<svg style="position:absolute;left:1681px;top:133px;overflow:visible;" width="32" height="30" viewBox="0 0 32 30"><path d="M9 2 V20 M0 11 H18" stroke="#5b5e60" stroke-width="3.5"/><path d="M20 14 V28 M26 14 V28 M18 14 H28 M18 28 H28" stroke="#5b5e60" stroke-width="1.6" stroke-dasharray="1.6 1.2"/></svg>
<svg style="position:absolute;left:1733px;top:133px;overflow:visible;" width="32" height="30" viewBox="0 0 32 30"><path d="M0 11 H18" stroke="#5b5e60" stroke-width="3.5"/><path d="M20 14 V28 M26 14 V28 M18 14 H28 M18 28 H28" stroke="#5b5e60" stroke-width="1.6" stroke-dasharray="1.6 1.2"/></svg>
<svg style="position:absolute;left:1783px;top:133px;overflow:visible;" width="33" height="30" viewBox="0 0 33 30"><rect x="1" y="2" width="17" height="17" stroke="#5b5e60" stroke-width="2.4" fill="none"/><path d="M4 9 L9 14 L19 3" stroke="#5b5e60" stroke-width="2.6" fill="none"/><path d="M22 14 V28 M28 14 V28 M20 14 H30 M20 28 H30" stroke="#5b5e60" stroke-width="1.6" stroke-dasharray="1.6 1.2"/></svg>
<div style="position:absolute;left:1832px;top:129px;width:2px;height:38px;background:#505355;"></div>
<svg style="position:absolute;left:1853px;top:138px;overflow:visible;" width="28" height="25" viewBox="0 0 28 25"><path d="M0 2 H22 M0 10 H14 M0 18 H14" stroke="#b5b7b9" stroke-width="3.4"/><path d="M22 8 V24 M18 8 H26 M18 24 H26" stroke="#b5b7b9" stroke-width="2.4"/></svg>
<svg style="position:absolute;left:1915px;top:143px;overflow:visible;" width="16" height="10" viewBox="0 0 16 10"><path d="M1 1 L5 5 L1 9 M9 1 L13 5 L9 9" stroke="#b5b7b9" stroke-width="2" fill="none"/></svg>
<svg style="position:absolute;left:1952px;top:141px;overflow:visible;" width="16" height="16" viewBox="0 0 16 16"><path d="M1 1 L15 15 M15 1 L1 15" stroke="#7a7c7f" stroke-width="2.2"/></svg>
<div style="position:absolute;left:739px;top:175px;width:1241px;height:1px;background:#37393b;"></div>
<div style="position:absolute;left:739px;top:176px;width:1241px;height:912px;background:#2b2b2b;"></div>
<div style="position:absolute;left:739px;top:176px;width:117px;height:912px;background:#333436;"></div>
<div style="position:absolute;left:856px;top:575px;width:1124px;height:44px;background:#323232;"></div>
<div style="position:absolute;left:739px;top:575px;width:117px;height:44px;background:#353638;"></div>
<div style="position:absolute;left:976px;top:178px;width:47px;height:44px;background:#3b3b3b;"></div>
<div style="position:absolute;left:895px;top:559px;width:1.5px;height:454px;background:#3b3b3b;"></div>
<div style="position:absolute;left:926px;top:617px;width:1.5px;height:264px;background:#3b3b3b;"></div>
<div style="position:absolute;left:957px;top:617px;width:1.5px;height:264px;background:#3b3b3b;"></div>
<div style="position:absolute;left:988px;top:750px;width:1.5px;height:85px;background:#3b3b3b;"></div>
<div style="position:absolute;left:855px;top:178px;width:2px;height:910px;background:#5e6163;"></div>
<div style="position:absolute;left:1023px;top:576px;width:16px;height:42px;background:#3b514d;"></div>
<div style="position:absolute;left:1225px;top:576px;width:16px;height:42px;background:#3b514d;"></div>
<div style="position:absolute;left:856px;top:176px;width:1124px;height:912px;overflow:hidden">
<div style="position:absolute;left:11px;top:11.00px;font-family:'Liberation Mono', monospace;font-size:30px;line-height:30px;white-space:pre;transform:scaleX(0.8667);transform-origin:0 0;-webkit-text-stroke:0.35px currentColor"><span style="color:#e6df9e;font-weight:700;-webkit-text-stroke:0.35px #e6df9e">import</span><span style="color:#ececec;font-weight:400;-webkit-text-stroke:0.35px #ececec"> </span><span style="color:#8a8a8a;font-weight:400;-webkit-text-stroke:0.35px #8a8a8a">...</span></div>
<div style="position:absolute;left:11px;top:99.00px;font-family:'Liberation Mono', monospace;font-size:30px;line-height:30px;white-space:pre;transform:scaleX(0.8667);transform-origin:0 0;-webkit-text-stroke:0.35px currentColor"><span style="color:#c3bd3a;font-weight:400;-webkit-text-stroke:0.35px #c3bd3a">@Entry</span></div>
<div style="position:absolute;left:11px;top:143.00px;font-family:'Liberation Mono', monospace;font-size:30px;line-height:30px;white-space:pre;transform:scaleX(0.8667);transform-origin:0 0;-webkit-text-stroke:0.35px currentColor"><span style="color:#c3bd3a;font-weight:400;-webkit-text-stroke:0.35px #c3bd3a">@Component</span></div>
<div style="position:absolute;left:11px;top:187.00px;font-family:'Liberation Mono', monospace;font-size:30px;line-height:30px;white-space:pre;transform:scaleX(0.8667);transform-origin:0 0;-webkit-text-stroke:0.35px currentColor"><span style="color:#e6df9e;font-weight:700;-webkit-text-stroke:0.35px #e6df9e">struct</span><span style="color:#ececec;font-weight:400;-webkit-text-stroke:0.35px #ececec"> </span><span style="color:#5f8b88;font-weight:400;-webkit-text-stroke:0.35px #5f8b88">Index</span><span style="color:#ececec;font-weight:400;-webkit-text-stroke:0.35px #ececec"> </span><span style="color:#e2a33b;font-weight:400;-webkit-text-stroke:0.35px #e2a33b">{</span></div>
<div style="position:absolute;left:11px;top:231.00px;font-family:'Liberation Mono', monospace;font-size:30px;line-height:30px;white-space:pre;transform:scaleX(0.8667);transform-origin:0 0;-webkit-text-stroke:0.35px currentColor"><span style="color:#ececec;font-weight:400;-webkit-text-stroke:0.35px #ececec">  </span><span style="color:#c3bd3a;font-weight:400;-webkit-text-stroke:0.35px #c3bd3a">@State</span><span style="color:#ececec;font-weight:400;-webkit-text-stroke:0.35px #ececec"> </span><span style="color:#ececec;font-weight:700;-webkit-text-stroke:0.35px #ececec">message</span><span style="color:#e6df9e;font-weight:400;-webkit-text-stroke:0.35px #e6df9e">:</span><span style="color:#ececec;font-weight:400;-webkit-text-stroke:0.35px #ececec"> </span><span style="color:#d48b3f;font-weight:400;-webkit-text-stroke:0.35px #d48b3f">string</span><span style="color:#ececec;font-weight:400;-webkit-text-stroke:0.35px #ececec"> </span><span style="color:#e6df9e;font-weight:400;-webkit-text-stroke:0.35px #e6df9e">=</span><span style="color:#ececec;font-weight:400;-webkit-text-stroke:0.35px #ececec"> </span><span style="color:#a986e8;font-weight:400;-webkit-text-stroke:0.35px #a986e8">&#x27;Hello <span style="display:inline-block;width:29.42px;text-align:center;font-size:28px">元</span><span style="display:inline-block;width:29.42px;text-align:center;font-size:28px">服</span><span style="display:inline-block;width:29.42px;text-align:center;font-size:28px">务</span>&#x27;</span><span style="color:#e6df9e;font-weight:400;-webkit-text-stroke:0.35px #e6df9e">;</span></div>
<div style="position:absolute;left:11px;top:319.00px;font-family:'Liberation Mono', monospace;font-size:30px;line-height:30px;white-space:pre;transform:scaleX(0.8667);transform-origin:0 0;-webkit-text-stroke:0.35px currentColor"><span style="color:#ececec;font-weight:400;-webkit-text-stroke:0.35px #ececec">  </span><span style="color:#58b9d6;font-weight:400;-webkit-text-stroke:0.35px #58b9d6">build</span><span style="color:#d5779d;font-weight:400;-webkit-text-stroke:0.35px #d5779d">()</span><span style="color:#ececec;font-weight:400;-webkit-text-stroke:0.35px #ececec"> </span><span style="color:#e2a33b;font-weight:400;-webkit-text-stroke:0.35px #e2a33b">{</span></div>
<div style="position:absolute;left:11px;top:363.00px;font-family:'Liberation Mono', monospace;font-size:30px;line-height:30px;white-space:pre;transform:scaleX(0.8667);transform-origin:0 0;-webkit-text-stroke:0.35px currentColor"><span style="color:#ececec;font-weight:400;-webkit-text-stroke:0.35px #ececec">    </span><span style="color:#58b9d6;font-weight:400;-webkit-text-stroke:0.35px #58b9d6">RelativeContainer</span><span style="color:#d5779d;font-weight:400;-webkit-text-stroke:0.35px #d5779d">()</span><span style="color:#ececec;font-weight:400;-webkit-text-stroke:0.35px #ececec"> </span><span style="color:#e2a33b;font-weight:400;-webkit-text-stroke:0.35px #e2a33b">{</span></div>
<div style="position:absolute;left:11px;top:407.00px;font-family:'Liberation Mono', monospace;font-size:30px;line-height:30px;white-space:pre;transform:scaleX(0.8667);transform-origin:0 0;-webkit-text-stroke:0.35px currentColor"><span style="color:#ececec;font-weight:400;-webkit-text-stroke:0.35px #ececec">      </span><span style="color:#58b9d6;font-weight:400;-webkit-text-stroke:0.35px #58b9d6">Text</span><span style="color:#f5e63a;font-weight:400;-webkit-text-stroke:0.35px #f5e63a">(</span><span style="color:#e6df9e;font-weight:700;-webkit-text-stroke:0.35px #e6df9e">this</span><span style="color:#e6df9e;font-weight:400;-webkit-text-stroke:0.35px #e6df9e">.</span><span style="color:#ececec;font-weight:400;-webkit-text-stroke:0.35px #ececec">message</span><span style="color:#f5e63a;font-weight:400;-webkit-text-stroke:0.35px #f5e63a">)</span></div>
<div style="position:absolute;left:11px;top:451.00px;font-family:'Liberation Mono', monospace;font-size:30px;line-height:30px;white-space:pre;transform:scaleX(0.8667);transform-origin:0 0;-webkit-text-stroke:0.35px currentColor"><span style="color:#ececec;font-weight:400;-webkit-text-stroke:0.35px #ececec">        </span><span style="color:#e6df9e;font-weight:400;-webkit-text-stroke:0.35px #e6df9e">.</span><span style="color:#58b9d6;font-weight:400;-webkit-text-stroke:0.35px #58b9d6">fontSize</span><span style="color:#d5779d;font-weight:400;-webkit-text-stroke:0.35px #d5779d">(</span><span style="color:#bfcf6a;font-weight:400;-webkit-text-stroke:0.35px #bfcf6a">50</span><span style="color:#d5779d;font-weight:400;-webkit-text-stroke:0.35px #d5779d">)</span></div>
<div style="position:absolute;left:11px;top:495.00px;font-family:'Liberation Mono', monospace;font-size:30px;line-height:30px;white-space:pre;transform:scaleX(0.8667);transform-origin:0 0;-webkit-text-stroke:0.35px currentColor"><span style="color:#ececec;font-weight:400;-webkit-text-stroke:0.35px #ececec">        </span><span style="color:#e6df9e;font-weight:400;-webkit-text-stroke:0.35px #e6df9e">.</span><span style="color:#58b9d6;font-weight:400;-webkit-text-stroke:0.35px #58b9d6">fontWeight</span><span style="color:#d5779d;font-weight:400;-webkit-text-stroke:0.35px #d5779d">(</span><span style="color:#ececec;font-weight:400;-webkit-text-stroke:0.35px #ececec">FontWeight</span><span style="color:#e6df9e;font-weight:400;-webkit-text-stroke:0.35px #e6df9e">.</span><span style="color:#ececec;font-weight:400;-webkit-text-stroke:0.35px #ececec">Bold</span><span style="color:#d5779d;font-weight:400;-webkit-text-stroke:0.35px #d5779d">)</span></div>
<div style="position:absolute;left:11px;top:539.00px;font-family:'Liberation Mono', monospace;font-size:30px;line-height:30px;white-space:pre;transform:scaleX(0.8667);transform-origin:0 0;-webkit-text-stroke:0.35px currentColor"><span style="color:#ececec;font-weight:400;-webkit-text-stroke:0.35px #ececec">        </span><span style="color:#e6df9e;font-weight:400;-webkit-text-stroke:0.35px #e6df9e">.</span><span style="color:#58b9d6;font-weight:400;-webkit-text-stroke:0.35px #58b9d6">alignRules</span><span style="color:#d5779d;font-weight:400;-webkit-text-stroke:0.35px #d5779d">(</span><span style="color:#e2a33b;font-weight:400;-webkit-text-stroke:0.35px #e2a33b">{</span></div>
<div style="position:absolute;left:11px;top:583.00px;font-family:'Liberation Mono', monospace;font-size:30px;line-height:30px;white-space:pre;transform:scaleX(0.8667);transform-origin:0 0;-webkit-text-stroke:0.35px currentColor"><span style="color:#ececec;font-weight:400;-webkit-text-stroke:0.35px #ececec">          </span><span style="color:#ececec;font-weight:400;-webkit-text-stroke:0.35px #ececec">center</span><span style="color:#e6df9e;font-weight:400;-webkit-text-stroke:0.35px #e6df9e">:</span><span style="color:#ececec;font-weight:400;-webkit-text-stroke:0.35px #ececec"> </span><span style="color:#e2a33b;font-weight:400;-webkit-text-stroke:0.35px #e2a33b">{</span><span style="color:#ececec;font-weight:400;-webkit-text-stroke:0.35px #ececec"> </span><span style="color:#ececec;font-weight:400;-webkit-text-stroke:0.35px #ececec">anchor</span><span style="color:#e6df9e;font-weight:400;-webkit-text-stroke:0.35px #e6df9e">:</span><span style="color:#ececec;font-weight:400;-webkit-text-stroke:0.35px #ececec"> </span><span style="color:#a986e8;font-weight:400;-webkit-text-stroke:0.35px #a986e8">&#x27;__container__&#x27;</span><span style="color:#e6df9e;font-weight:400;-webkit-text-stroke:0.35px #e6df9e">,</span><span style="color:#ececec;font-weight:400;-webkit-text-stroke:0.35px #ececec"> </span><span style="color:#ececec;font-weight:400;-webkit-text-stroke:0.35px #ececec">align</span><span style="color:#e6df9e;font-weight:400;-webkit-text-stroke:0.35px #e6df9e">:</span><span style="color:#ececec;font-weight:400;-webkit-text-stroke:0.35px #ececec"> </span><span style="color:#ececec;font-weight:400;-webkit-text-stroke:0.35px #ececec">VerticalAlign</span><span style="color:#e6df9e;font-weight:400;-webkit-text-stroke:0.35px #e6df9e">.</span><span style="color:#ececec;font-weight:400;-webkit-text-stroke:0.35px #ececec">Center</span><span style="color:#ececec;font-weight:400;-webkit-text-stroke:0.35px #ececec"> </span><span style="color:#e2a33b;font-weight:400;-webkit-text-stroke:0.35px #e2a33b">},</span></div>
<div style="position:absolute;left:11px;top:627.00px;font-family:'Liberation Mono', monospace;font-size:30px;line-height:30px;white-space:pre;transform:scaleX(0.8667);transform-origin:0 0;-webkit-text-stroke:0.35px currentColor"><span style="color:#ececec;font-weight:400;-webkit-text-stroke:0.35px #ececec">          </span><span style="color:#ececec;font-weight:400;-webkit-text-stroke:0.35px #ececec">middle</span><span style="color:#e6df9e;font-weight:400;-webkit-text-stroke:0.35px #e6df9e">:</span><span style="color:#ececec;font-weight:400;-webkit-text-stroke:0.35px #ececec"> </span><span style="color:#e2a33b;font-weight:400;-webkit-text-stroke:0.35px #e2a33b">{</span><span style="color:#ececec;font-weight:400;-webkit-text-stroke:0.35px #ececec"> </span><span style="color:#ececec;font-weight:400;-webkit-text-stroke:0.35px #ececec">anchor</span><span style="color:#e6df9e;font-weight:400;-webkit-text-stroke:0.35px #e6df9e">:</span><span style="color:#ececec;font-weight:400;-webkit-text-stroke:0.35px #ececec"> </span><span style="color:#a986e8;font-weight:400;-webkit-text-stroke:0.35px #a986e8">&#x27;__container__&#x27;</span><span style="color:#e6df9e;font-weight:400;-webkit-text-stroke:0.35px #e6df9e">,</span><span style="color:#ececec;font-weight:400;-webkit-text-stroke:0.35px #ececec"> </span><span style="color:#ececec;font-weight:400;-webkit-text-stroke:0.35px #ececec">align</span><span style="color:#e6df9e;font-weight:400;-webkit-text-stroke:0.35px #e6df9e">:</span><span style="color:#ececec;font-weight:400;-webkit-text-stroke:0.35px #ececec"> </span><span style="color:#ececec;font-weight:400;-webkit-text-stroke:0.35px #ececec">HorizontalAlign</span><span style="color:#e6df9e;font-weight:400;-webkit-text-stroke:0.35px #e6df9e">.</span><span style="color:#ececec;font-weight:400;-webkit-text-stroke:0.35px #ececec">Center</span><span style="color:#ececec;font-weight:400;-webkit-text-stroke:0.35px #ececec"> </span><span style="color:#e2a33b;font-weight:400;-webkit-text-stroke:0.35px #e2a33b">}</span></div>
<div style="position:absolute;left:11px;top:671.00px;font-family:'Liberation Mono', monospace;font-size:30px;line-height:30px;white-space:pre;transform:scaleX(0.8667);transform-origin:0 0;-webkit-text-stroke:0.35px currentColor"><span style="color:#ececec;font-weight:400;-webkit-text-stroke:0.35px #ececec">        </span><span style="color:#e2a33b;font-weight:400;-webkit-text-stroke:0.35px #e2a33b">}</span><span style="color:#d5779d;font-weight:400;-webkit-text-stroke:0.35px #d5779d">)</span></div>
<div style="position:absolute;left:11px;top:715.00px;font-family:'Liberation Mono', monospace;font-size:30px;line-height:30px;white-space:pre;transform:scaleX(0.8667);transform-origin:0 0;-webkit-text-stroke:0.35px currentColor"><span style="color:#ececec;font-weight:400;-webkit-text-stroke:0.35px #ececec">    </span><span style="color:#e2a33b;font-weight:400;-webkit-text-stroke:0.35px #e2a33b">}</span></div>
<div style="position:absolute;left:11px;top:759.00px;font-family:'Liberation Mono', monospace;font-size:30px;line-height:30px;white-space:pre;transform:scaleX(0.8667);transform-origin:0 0;-webkit-text-stroke:0.35px currentColor"><span style="color:#ececec;font-weight:400;-webkit-text-stroke:0.35px #ececec">    </span><span style="color:#e6df9e;font-weight:400;-webkit-text-stroke:0.35px #e6df9e">.</span><span style="color:#58b9d6;font-weight:400;-webkit-text-stroke:0.35px #58b9d6">height</span><span style="color:#d5779d;font-weight:400;-webkit-text-stroke:0.35px #d5779d">(</span><span style="color:#a986e8;font-weight:400;-webkit-text-stroke:0.35px #a986e8">&#x27;100%&#x27;</span><span style="color:#d5779d;font-weight:400;-webkit-text-stroke:0.35px #d5779d">)</span></div>
<div style="position:absolute;left:11px;top:803.00px;font-family:'Liberation Mono', monospace;font-size:30px;line-height:30px;white-space:pre;transform:scaleX(0.8667);transform-origin:0 0;-webkit-text-stroke:0.35px currentColor"><span style="color:#ececec;font-weight:400;-webkit-text-stroke:0.35px #ececec">    </span><span style="color:#e6df9e;font-weight:400;-webkit-text-stroke:0.35px #e6df9e">.</span><span style="color:#58b9d6;font-weight:400;-webkit-text-stroke:0.35px #58b9d6">width</span><span style="color:#d5779d;font-weight:400;-webkit-text-stroke:0.35px #d5779d">(</span><span style="color:#a986e8;font-weight:400;-webkit-text-stroke:0.35px #a986e8">&#x27;100%&#x27;</span><span style="color:#d5779d;font-weight:400;-webkit-text-stroke:0.35px #d5779d">)</span></div>
<div style="position:absolute;left:11px;top:847.00px;font-family:'Liberation Mono', monospace;font-size:30px;line-height:30px;white-space:pre;transform:scaleX(0.8667);transform-origin:0 0;-webkit-text-stroke:0.35px currentColor"><span style="color:#ececec;font-weight:400;-webkit-text-stroke:0.35px #ececec">  </span><span style="color:#e2a33b;font-weight:400;-webkit-text-stroke:0.35px #e2a33b">}</span></div>
</div>
<div style="position:absolute;left:739px;top:189.07px;width:39px;text-align:right;font-family:'Liberation Mono', monospace;font-size:27.3px;line-height:27.3px;color:#606366;white-space:pre;transform:scaleX(0.845);transform-origin:100% 0">1</div>
<div style="position:absolute;left:739px;top:233.07px;width:39px;text-align:right;font-family:'Liberation Mono', monospace;font-size:27.3px;line-height:27.3px;color:#606366;white-space:pre;transform:scaleX(0.845);transform-origin:100% 0">4</div>
<div style="position:absolute;left:739px;top:277.07px;width:39px;text-align:right;font-family:'Liberation Mono', monospace;font-size:27.3px;line-height:27.3px;color:#606366;white-space:pre;transform:scaleX(0.845);transform-origin:100% 0">5</div>
<div style="position:absolute;left:739px;top:321.07px;width:39px;text-align:right;font-family:'Liberation Mono', monospace;font-size:27.3px;line-height:27.3px;color:#606366;white-space:pre;transform:scaleX(0.845);transform-origin:100% 0">6</div>
<div style="position:absolute;left:739px;top:365.07px;width:39px;text-align:right;font-family:'Liberation Mono', monospace;font-size:27.3px;line-height:27.3px;color:#606366;white-space:pre;transform:scaleX(0.845);transform-origin:100% 0">7</div>
<div style="position:absolute;left:739px;top:409.07px;width:39px;text-align:right;font-family:'Liberation Mono', monospace;font-size:27.3px;line-height:27.3px;color:#606366;white-space:pre;transform:scaleX(0.845);transform-origin:100% 0">8</div>
<div style="position:absolute;left:739px;top:453.07px;width:39px;text-align:right;font-family:'Liberation Mono', monospace;font-size:27.3px;line-height:27.3px;color:#606366;white-space:pre;transform:scaleX(0.845);transform-origin:100% 0">9</div>
<div style="position:absolute;left:739px;top:497.07px;width:39px;text-align:right;font-family:'Liberation Mono', monospace;font-size:27.3px;line-height:27.3px;color:#606366;white-space:pre;transform:scaleX(0.845);transform-origin:100% 0">10</div>
<div style="position:absolute;left:739px;top:541.07px;width:39px;text-align:right;font-family:'Liberation Mono', monospace;font-size:27.3px;line-height:27.3px;color:#606366;white-space:pre;transform:scaleX(0.845);transform-origin:100% 0">11</div>
<div style="position:absolute;left:739px;top:585.07px;width:39px;text-align:right;font-family:'Liberation Mono', monospace;font-size:27.3px;line-height:27.3px;color:#a4a3a3;white-space:pre;transform:scaleX(0.845);transform-origin:100% 0">12</div>
<div style="position:absolute;left:739px;top:629.07px;width:39px;text-align:right;font-family:'Liberation Mono', monospace;font-size:27.3px;line-height:27.3px;color:#606366;white-space:pre;transform:scaleX(0.845);transform-origin:100% 0">13</div>
<div style="position:absolute;left:739px;top:673.07px;width:39px;text-align:right;font-family:'Liberation Mono', monospace;font-size:27.3px;line-height:27.3px;color:#606366;white-space:pre;transform:scaleX(0.845);transform-origin:100% 0">14</div>
<div style="position:absolute;left:739px;top:717.07px;width:39px;text-align:right;font-family:'Liberation Mono', monospace;font-size:27.3px;line-height:27.3px;color:#606366;white-space:pre;transform:scaleX(0.845);transform-origin:100% 0">15</div>
<div style="position:absolute;left:739px;top:761.07px;width:39px;text-align:right;font-family:'Liberation Mono', monospace;font-size:27.3px;line-height:27.3px;color:#606366;white-space:pre;transform:scaleX(0.845);transform-origin:100% 0">16</div>
<div style="position:absolute;left:739px;top:805.07px;width:39px;text-align:right;font-family:'Liberation Mono', monospace;font-size:27.3px;line-height:27.3px;color:#606366;white-space:pre;transform:scaleX(0.845);transform-origin:100% 0">17</div>
<div style="position:absolute;left:739px;top:849.07px;width:39px;text-align:right;font-family:'Liberation Mono', monospace;font-size:27.3px;line-height:27.3px;color:#606366;white-space:pre;transform:scaleX(0.845);transform-origin:100% 0">18</div>
<div style="position:absolute;left:739px;top:893.07px;width:39px;text-align:right;font-family:'Liberation Mono', monospace;font-size:27.3px;line-height:27.3px;color:#606366;white-space:pre;transform:scaleX(0.845);transform-origin:100% 0">19</div>
<div style="position:absolute;left:739px;top:937.07px;width:39px;text-align:right;font-family:'Liberation Mono', monospace;font-size:27.3px;line-height:27.3px;color:#606366;white-space:pre;transform:scaleX(0.845);transform-origin:100% 0">20</div>
<div style="position:absolute;left:739px;top:981.07px;width:39px;text-align:right;font-family:'Liberation Mono', monospace;font-size:27.3px;line-height:27.3px;color:#606366;white-space:pre;transform:scaleX(0.845);transform-origin:100% 0">21</div>
<div style="position:absolute;left:739px;top:1025.07px;width:39px;text-align:right;font-family:'Liberation Mono', monospace;font-size:27.3px;line-height:27.3px;color:#606366;white-space:pre;transform:scaleX(0.845);transform-origin:100% 0">22</div>
<div style="position:absolute;left:739px;top:1069.07px;width:39px;text-align:right;font-family:'Liberation Mono', monospace;font-size:27.3px;line-height:27.3px;color:#606366;white-space:pre;transform:scaleX(0.845);transform-origin:100% 0">23</div>
<svg style="position:absolute;left:847px;top:192px;overflow:visible;" width="18" height="18" viewBox="0 0 18 18"><rect x="1" y="1" width="16" height="16" fill="#2b2b2b" stroke="#5e6163" stroke-width="2"/><path d="M4.5 9 H13.5 M9 4.5 V13.5" stroke="#5e6163" stroke-width="1.6"/></svg>
<svg style="position:absolute;left:847px;top:368px;overflow:visible;" width="18" height="26" viewBox="0 0 18 26"><path d="M1 1 H17 V16.5 L9 24 L1 16.5 Z" fill="#2b2b2b" stroke="#5e6163" stroke-width="2"/><path d="M5 10 H13" stroke="#5e6163" stroke-width="2"/></svg>
<svg style="position:absolute;left:847px;top:500px;overflow:visible;" width="18" height="26" viewBox="0 0 18 26"><path d="M1 1 H17 V16.5 L9 24 L1 16.5 Z" fill="#2b2b2b" stroke="#5e6163" stroke-width="2"/><path d="M5 10 H13" stroke="#5e6163" stroke-width="2"/></svg>
<svg style="position:absolute;left:847px;top:544px;overflow:visible;" width="18" height="26" viewBox="0 0 18 26"><path d="M1 1 H17 V16.5 L9 24 L1 16.5 Z" fill="#2b2b2b" stroke="#5e6163" stroke-width="2"/><path d="M5 10 H13" stroke="#5e6163" stroke-width="2"/></svg>
<svg style="position:absolute;left:847px;top:720px;overflow:visible;" width="18" height="26" viewBox="0 0 18 26"><path d="M1 1 H17 V16.5 L9 24 L1 16.5 Z" fill="#2b2b2b" stroke="#5e6163" stroke-width="2"/><path d="M5 10 H13" stroke="#5e6163" stroke-width="2"/></svg>
<svg style="position:absolute;left:847px;top:847.5px;overflow:visible;" width="18" height="25" viewBox="0 0 18 25"><path d="M1 8 L9 0.5 L17 8 V23 H1 Z" fill="#2b2b2b" stroke="#5e6163" stroke-width="2"/><path d="M5 14.5 H13" stroke="#5e6163" stroke-width="2"/></svg>
<svg style="position:absolute;left:847px;top:891.5px;overflow:visible;" width="18" height="25" viewBox="0 0 18 25"><path d="M1 8 L9 0.5 L17 8 V23 H1 Z" fill="#2b2b2b" stroke="#5e6163" stroke-width="2"/><path d="M5 14.5 H13" stroke="#5e6163" stroke-width="2"/></svg>
<svg style="position:absolute;left:847px;top:1023.5px;overflow:visible;" width="18" height="25" viewBox="0 0 18 25"><path d="M1 8 L9 0.5 L17 8 V23 H1 Z" fill="#2b2b2b" stroke="#5e6163" stroke-width="2"/><path d="M5 14.5 H13" stroke="#5e6163" stroke-width="2"/></svg>
<svg style="position:absolute;left:885px;top:532px;overflow:visible;" width="22" height="29" viewBox="0 0 22 29"><circle cx="11" cy="9" r="9.5" fill="#f0a732"/><path d="M4 14 L7 19 H15 L18 14 Z" fill="#f0a732"/><path d="M5 22 H17 M6 26 H16" stroke="#c6c8ca" stroke-width="2.5"/></svg>
<svg style="position:absolute;left:1842px;top:193px;overflow:visible;" width="24" height="21" viewBox="0 0 24 21"><path d="M12 0 L24 21 H0 Z" fill="#d6a91c"/><rect x="10.5" y="6" width="3" height="6" fill="#2b2b2b"/><rect x="10.5" y="14" width="3" height="3" fill="#2b2b2b"/></svg>
<div style="position:absolute;left:1873px;top:196.22px;font-family:'Liberation Sans', sans-serif;font-size:21px;line-height:21px;color:#b8b8b8;font-weight:400;white-space:pre;">1</div>
<svg style="position:absolute;left:1905px;top:196px;overflow:visible;" width="17" height="11" viewBox="0 0 17 11"><path d="M1.5 9.5 L8.5 2 L15.5 9.5" stroke="#b8babc" stroke-width="2.8" fill="none"/></svg>
<svg style="position:absolute;left:1948px;top:199px;overflow:visible;" width="17" height="11" viewBox="0 0 17 11"><path d="M1.5 1.5 L8.5 9 L15.5 1.5" stroke="#b8babc" stroke-width="2.8" fill="none"/></svg>
<div style="position:absolute;left:1960px;top:234px;width:14px;height:286px;background:#4a4b4c;border-radius:7px;"></div>
<div style="position:absolute;left:1952px;top:845px;width:28px;height:4px;background:#b9a22c;"></div>
<div style="position:absolute;left:739px;top:1088px;width:1241px;height:45px;background:#323436;"></div>
<div style="position:absolute;left:739px;top:1087px;width:1241px;height:2px;background:#56585a;"></div>
<div style="position:absolute;left:760px;top:1099.85px;font-family:'Liberation Sans', sans-serif;font-size:23.8px;line-height:23.8px;color:#bbbbbb;font-weight:400;white-space:pre;">Index</div>
<svg style="position:absolute;left:840px;top:1106px;overflow:visible;" width="8" height="13" viewBox="0 0 8 13"><path d="M1 1 L6.5 6.5 L1 12" stroke="#6d6f71" stroke-width="1.6" fill="none"/></svg>
<div style="position:absolute;left:866px;top:1099.85px;font-family:'Liberation Sans', sans-serif;font-size:23.8px;line-height:23.8px;color:#bbbbbb;font-weight:400;white-space:pre;">build()</div>
<svg style="position:absolute;left:952px;top:1106px;overflow:visible;" width="8" height="13" viewBox="0 0 8 13"><path d="M1 1 L6.5 6.5 L1 12" stroke="#6d6f71" stroke-width="1.6" fill="none"/></svg>
<div style="position:absolute;left:979px;top:1099.85px;font-family:'Liberation Sans', sans-serif;font-size:23.8px;line-height:23.8px;color:#bbbbbb;font-weight:400;white-space:pre;">RelativeContainer</div>
<div style="position:absolute;left:1980px;top:65px;width:3px;height:1068px;background:#2f3234;"></div>
<div style="position:absolute;left:1982px;top:65px;width:994px;height:53px;background:#3c4a58;"></div>
<div style="position:absolute;left:1995px;top:80.41px;font-family:'Liberation Sans', sans-serif;font-size:25.5px;line-height:25.5px;color:#c8cdd2;font-weight:400;white-space:pre;">Previewer(Debug)</div>
<svg style="position:absolute;left:2885px;top:79px;overflow:visible;" width="26" height="26" viewBox="0 0 26 26"><path d="M22.73 9.34 L25.69 10.16 L25.69 15.84 L22.73 16.66 L21.04 19.60 L21.80 22.57 L16.89 25.41 L14.69 23.26 L11.31 23.26 L9.11 25.41 L4.20 22.57 L4.96 19.60 L3.27 16.66 L0.31 15.84 L0.31 10.16 L3.27 9.34 L4.96 6.40 L4.20 3.43 L9.11 0.59 L11.31 2.74 L14.69 2.74 L16.89 0.59 L21.80 3.43 L21.04 6.40 Z" fill="#bcc0c4"/><circle cx="13.0" cy="13.0" r="4.16" fill="#3c4a58"/></svg>
<div style="position:absolute;left:2938px;top:90px;width:24px;height:4.5px;background:#bcc0c4;"></div>
<div style="position:absolute;left:1982px;top:118px;width:994px;height:2px;background:#2b2e32;"></div>
<div style="position:absolute;left:1982px;top:120px;width:994px;height:64px;background:#3e4148;"></div>
<div style="position:absolute;left:2013px;top:137.45px;font-family:'Liberation Sans', sans-serif;font-size:29px;line-height:29px;color:#eeeeee;font-weight:400;white-space:pre;">/pages/Index</div>
<svg style="position:absolute;left:2809px;top:138px;overflow:visible;" width="26" height="28" viewBox="0 0 26 28"><circle cx="11.5" cy="11.5" r="10" stroke="#a9acb0" stroke-width="2.2" fill="none"/><path d="M6 11.5 H17" stroke="#a9acb0" stroke-width="2.2"/><path d="M18.5 18.5 L25 25" stroke="#a9acb0" stroke-width="2.4"/></svg>
<svg style="position:absolute;left:2853px;top:138px;overflow:visible;" width="26" height="28" viewBox="0 0 26 28"><circle cx="11.5" cy="11.5" r="10" stroke="#a9acb0" stroke-width="2.2" fill="none"/><path d="M6 11.5 H17 M11.5 6 V17" stroke="#a9acb0" stroke-width="2.2"/><path d="M18.5 18.5 L25 25" stroke="#a9acb0" stroke-width="2.4"/></svg>
<svg style="position:absolute;left:2898px;top:140px;overflow:visible;" width="24" height="24" viewBox="0 0 24 24"><rect x="1" y="1" width="22" height="22" stroke="#a9acb0" stroke-width="2.2" fill="none"/><path d="M5 10 V5 H10 M19 14 V19 H14" stroke="#a9acb0" stroke-width="2.2" fill="none"/></svg>
<svg style="position:absolute;left:2940px;top:140px;overflow:visible;" width="28" height="25" viewBox="0 0 28 25"><path d="M3 4 L6 1.5 V24 M21 4 L24 1.5 V24" stroke="#a9acb0" stroke-width="2.6" fill="none"/><rect x="12.5" y="8" width="3" height="3" fill="#a9acb0"/><rect x="12.5" y="17" width="3" height="3" fill="#a9acb0"/></svg>
<div style="position:absolute;left:1982px;top:184px;width:994px;height:948px;background:#31373e;"></div>
<div style="position:absolute;left:2344px;top:274.12px;font-family:'Liberation Sans', sans-serif;font-size:28.8px;line-height:28.8px;color:#f0f0f0;font-weight:400;white-space:pre;">1080 x 2340 (Phone)</div>
<div style="position:absolute;left:2315px;top:328px;width:327px;height:679px;border-radius:20px;background:radial-gradient(circle at 0 0, rgba(130,130,130,0.75) 0px, rgba(90,90,90,0.35) 45px, rgba(40,40,40,0) 90px), radial-gradient(circle at 100% 100%, rgba(150,150,150,0.7) 0px, rgba(90,90,90,0.3) 45px, rgba(40,40,40,0) 90px), #1c1c1c;box-shadow:inset 1.5px 1.5px 0 rgba(255,255,255,0.12), inset -1.5px -1.5px 0 rgba(255,255,255,0.10)"></div>
<div style="position:absolute;left:2642px;top:449px;width:7px;height:105px;background:#1e1e1e;border-radius:0 3px 3px 0;"></div>
<div style="position:absolute;left:2642px;top:570px;width:7px;height:59px;background:#1e1e1e;border-radius:0 3px 3px 0;"></div>
<div style="position:absolute;left:2328px;top:340px;width:303px;height:655px;background:#ffffff;border-radius:8px;"></div>
<div style="position:absolute;left:2554px;top:382px;width:69px;height:31px;border-radius:16px;background:#ffffff;border:1px solid #eeeeee"></div>
<svg style="position:absolute;left:2570px;top:390px;overflow:visible;" width="12" height="14" viewBox="0 0 12 14"><circle cx="2" cy="3" r="1.3" fill="#222"/><circle cx="9" cy="3" r="1.3" fill="#222"/><circle cx="2" cy="11" r="1.3" fill="#222"/><circle cx="9" cy="11" r="1.3" fill="#222"/></svg>
<div style="position:absolute;left:2588px;top:388px;width:1px;height:19px;background:#e6e6e6;"></div>
<svg style="position:absolute;left:2596px;top:389px;overflow:visible;" width="18" height="18" viewBox="0 0 18 18"><circle cx="9" cy="9" r="7.5" stroke="#222" stroke-width="1.6" fill="none"/><path d="M4.5 9 H13.5" stroke="#222" stroke-width="1.6"/></svg>
<div style="position:absolute;left:2328px;top:646px;width:303px;text-align:center;font-family:'Liberation Sans', sans-serif;font-size:41.5px;line-height:50px;color:#283040;font-weight:700;white-space:pre">Hello 元服务</div>
<div style="position:absolute;left:2439px;top:1028px;width:78px;height:64px;background:#3b3f46;"></div>
<svg style="position:absolute;left:2462px;top:1055px;overflow:visible;" width="32" height="10" viewBox="0 0 32 10"><circle cx="5" cy="5" r="4" fill="#8d9096"/><circle cx="16" cy="5" r="4" fill="#8d9096"/><circle cx="27" cy="5" r="4" fill="#8d9096"/></svg>
<div style="position:absolute;left:2976px;top:65px;width:46px;height:1537px;background:#3e3f42;"></div>
<div style="position:absolute;left:2976px;top:65px;width:1px;height:1537px;background:#2f3133;"></div>
<div style="position:absolute;left:2977px;top:840px;width:45px;height:265px;background:#2b2d30;"></div>
<svg style="position:absolute;left:2987px;top:88px;overflow:visible;" width="24" height="26" viewBox="0 0 24 26"><path d="M3 18 Q3 6 12 5 Q21 6 21 18 L23 21 H1 Z" fill="#b5b7b9"/><circle cx="12" cy="23.5" r="2.5" fill="#b5b7b9"/><circle cx="19" cy="4.5" r="4.5" fill="#3b9ae6"/></svg>
<div style="position:absolute;left:2999px;top:183px;transform:translate(-50%,-50%) rotate(90deg);font-family:'Liberation Sans', sans-serif;font-size:22px;line-height:22px;color:#b0b2b4;font-weight:400;white-space:pre">Notifications</div>
<svg style="position:absolute;left:2986px;top:290px;overflow:visible;" width="27" height="28" viewBox="0 0 27 28"><circle cx="13.5" cy="14" r="11" stroke="#b5b7b9" stroke-width="2.4" fill="none"/><rect x="8" y="8.5" width="4.5" height="4.5" fill="#b5b7b9"/><rect x="14.5" y="8.5" width="4.5" height="4.5" fill="#b5b7b9"/><rect x="8" y="15" width="4.5" height="4.5" fill="#b5b7b9"/><rect x="14.5" y="15" width="4.5" height="4.5" fill="#b5b7b9"/><circle cx="13.5" cy="3" r="2.5" fill="#b5b7b9"/><circle cx="3" cy="20" r="2.5" fill="#b5b7b9"/><circle cx="24" cy="20" r="2.5" fill="#b5b7b9"/></svg>
<div style="position:absolute;left:2999px;top:391px;transform:translate(-50%,-50%) rotate(90deg);font-family:'Liberation Sans', sans-serif;font-size:22px;line-height:22px;color:#b0b2b4;font-weight:400;white-space:pre">AppAnalyzer</div>
<svg style="position:absolute;left:2988px;top:503px;overflow:visible;" width="23" height="24" viewBox="0 0 23 24"><path d="M11.5 0 L23 6 V18 L11.5 24 L0 18 V6 Z" fill="#1e88e5"/><path d="M11.5 0 L23 6 L11.5 12 L0 6 Z" fill="#49c3f2"/><path d="M7 8 H11 V17 H7 Z M13 9 H17 V13 H13 Z" fill="#ffffff" opacity="0.9"/></svg>
<div style="position:absolute;left:2999px;top:596px;transform:translate(-50%,-50%) rotate(90deg);font-family:'Liberation Sans', sans-serif;font-size:22px;line-height:22px;color:#b0b2b4;font-weight:400;white-space:pre">CodeGenie</div>
<svg style="position:absolute;left:2987px;top:697px;overflow:visible;" width="24" height="16" viewBox="0 0 24 16"><path d="M1 8 Q12 -4 23 8 Q12 20 1 8 Z" fill="#b5b7b9"/><circle cx="12" cy="8" r="4" fill="#3c3f41"/><circle cx="12" cy="8" r="2" fill="#b5b7b9"/></svg>
<div style="position:absolute;left:2999px;top:775px;transform:translate(-50%,-50%) rotate(90deg);font-family:'Liberation Sans', sans-serif;font-size:22px;line-height:22px;color:#b0b2b4;font-weight:400;white-space:pre">Previewer</div>
<svg style="position:absolute;left:2988px;top:868px;overflow:visible;" width="22" height="29" viewBox="0 0 22 29"><rect x="1.2" y="1.2" width="18" height="26" rx="4" stroke="#c6c8ca" stroke-width="2.2" fill="none"/><ellipse cx="16" cy="24" rx="4" ry="2.5" stroke="#c6c8ca" stroke-width="1.4" fill="#2b2d30"/></svg>
<div style="position:absolute;left:2999px;top:1001px;transform:translate(-50%,-50%) rotate(90deg);font-family:'Liberation Sans', sans-serif;font-size:23px;line-height:23px;color:#e8e8e8;font-weight:400;white-space:pre">Previewer(Debug)</div>
<svg style="position:absolute;left:2990px;top:1354px;overflow:visible;" width="18" height="24" viewBox="0 0 18 24"><rect x="1.2" y="1.2" width="15.6" height="21.6" rx="2" stroke="#b5b7b9" stroke-width="2.4" fill="none"/></svg>
<div style="position:absolute;left:2999px;top:1488px;transform:translate(-50%,-50%) rotate(90deg);font-family:'Liberation Sans', sans-serif;font-size:22px;line-height:22px;color:#b0b2b4;font-weight:400;white-space:pre">Device File Browser</div>
<div style="position:absolute;left:39px;top:1132px;width:2937px;height:2px;background:#333538;"></div>
<div style="position:absolute;left:39px;top:1134px;width:2937px;height:52px;background:#3e3f42;"></div>
<div style="position:absolute;left:52px;top:1148.84px;font-family:'Liberation Sans', sans-serif;font-size:25px;line-height:25px;color:#bbbbbb;font-weight:400;white-space:pre;">Run:</div>
<svg style="position:absolute;left:146px;top:1143px;overflow:visible;" width="32" height="35" viewBox="0 0 32 35"><path d="M13 1 L21 13 L5 13 Z" fill="#b9bbbd"/><circle cx="7" cy="23" r="6" fill="#b9bbbd"/><rect x="16" y="17" width="12" height="12" fill="#f0b629"/><circle cx="25" cy="28" r="5" fill="#2bd04a" stroke="#3c3f41" stroke-width="1"/></svg>
<div style="position:absolute;left:184px;top:1147.99px;font-family:'Liberation Sans', sans-serif;font-size:26px;line-height:26px;color:#bbbbbb;font-weight:400;white-space:pre;">entry</div>
<svg style="position:absolute;left:257px;top:1154px;overflow:visible;" width="15" height="15" viewBox="0 0 15 15"><path d="M1 1 L14 14 M14 1 L1 14" stroke="#6d6f72" stroke-width="2"/></svg>
<div style="position:absolute;left:119px;top:1182px;width:175px;height:4px;background:#8e9194;border-radius:2px;"></div>
<svg style="position:absolute;left:2885px;top:1147px;overflow:visible;" width="26" height="26" viewBox="0 0 26 26"><path d="M22.73 9.34 L25.69 10.16 L25.69 15.84 L22.73 16.66 L21.04 19.60 L21.80 22.57 L16.89 25.41 L14.69 23.26 L11.31 23.26 L9.11 25.41 L4.20 22.57 L4.96 19.60 L3.27 16.66 L0.31 15.84 L0.31 10.16 L3.27 9.34 L4.96 6.40 L4.20 3.43 L9.11 0.59 L11.31 2.74 L14.69 2.74 L16.89 0.59 L21.80 3.43 L21.04 6.40 Z" fill="#afb1b3"/><circle cx="13.0" cy="13.0" r="4.16" fill="#3e3f42"/></svg>
<div style="position:absolute;left:2938px;top:1157px;width:24px;height:4.5px;background:#afb1b3;"></div>
<div style="position:absolute;left:39px;top:1186px;width:115px;height:416px;background:#3e3f42;"></div>
<div style="position:absolute;left:97px;top:1186px;width:1px;height:416px;background:#37393b;"></div>
<div style="position:absolute;left:154px;top:1186px;width:2822px;height:416px;background:#2b2b2b;"></div>
<svg style="position:absolute;left:55px;top:1202px;overflow:visible;" width="28" height="28" viewBox="0 0 28 28"><path d="M8 22 A9.5 9.5 0 1 1 21 8" stroke="#3fb54f" stroke-width="4" fill="none"/><path d="M16 1 L26 7 L17 13 Z" fill="#3fb54f"/><rect x="15" y="16" width="10" height="10" fill="#c8c8c8"/></svg>
<svg style="position:absolute;left:55px;top:1254px;overflow:visible;" width="28" height="28" viewBox="0 0 28 28"><path d="M4 24 L16 12" stroke="#c6c8ca" stroke-width="5.5" stroke-linecap="round"/><path d="M14 9 A8 8 0 0 1 26 4 L20 10 L23 13 L28 8 A8 8 0 0 1 18 18 Z" fill="#c6c8ca"/></svg>
<div style="position:absolute;left:48px;top:1300px;width:40px;height:2px;background:#4d5052;"></div>
<div style="position:absolute;left:58px;top:1324px;width:20px;height:21px;background:#d9504a;"></div>
<div style="position:absolute;left:48px;top:1366px;width:40px;height:2px;background:#4d5052;"></div>
<svg style="position:absolute;left:56px;top:1390px;overflow:visible;" width="24" height="19" viewBox="0 0 24 19"><rect x="0" y="0" width="11" height="8" fill="#c6c8ca"/><rect x="13" y="0" width="11" height="8" fill="#c6c8ca"/><rect x="0" y="10" width="24" height="9" fill="#c6c8ca"/></svg>
<div style="position:absolute;left:48px;top:1432px;width:40px;height:2px;background:#4d5052;"></div>
<svg style="position:absolute;left:54px;top:1451px;overflow:visible;" width="30" height="30" viewBox="0 0 30 30"><path d="M17 0 L28 11 L23 13 L20 19 L9 8 L15 5 Z" fill="#c6c8ca"/><path d="M6 11 L17 22 Z" stroke="#c6c8ca" stroke-width="3.5"/><path d="M1 28 L13 16" stroke="#c6c8ca" stroke-width="3"/></svg>
<svg style="position:absolute;left:115px;top:1204px;overflow:visible;" width="22" height="28" viewBox="0 0 22 28"><path d="M11 27 V4 M2 12 L11 3 L20 12" stroke="#5b5e60" stroke-width="3.5" fill="none"/></svg>
<svg style="position:absolute;left:115px;top:1256px;overflow:visible;" width="22" height="28" viewBox="0 0 22 28"><path d="M11 1 V24 M2 16 L11 25 L20 16" stroke="#5b5e60" stroke-width="3.5" fill="none"/></svg>
<div style="position:absolute;left:104px;top:1300px;width:44px;height:44px;background:#53565a;border-radius:7px;"></div>
<svg style="position:absolute;left:113px;top:1310px;overflow:visible;" width="27" height="24" viewBox="0 0 27 24"><path d="M1 2 H25 M1 12 H19 Q25 12 25 17 Q25 22 19 22 H12" stroke="#c6c8ca" stroke-width="3.2" fill="none"/><path d="M7 22 L13 17 V27 Z" fill="#c6c8ca"/><path d="M1 22 H6" stroke="#c6c8ca" stroke-width="3.2"/></svg>
<div style="position:absolute;left:104px;top:1352px;width:44px;height:44px;background:#53565a;border-radius:7px;"></div>
<svg style="position:absolute;left:113px;top:1360px;overflow:visible;" width="27" height="26" viewBox="0 0 27 26"><path d="M1 8 H8 M1 15 H8 M1 24 H26" stroke="#c6c8ca" stroke-width="3.2"/><path d="M17 1 V16" stroke="#c6c8ca" stroke-width="3.2"/><path d="M10 12 L17 19 L24 12" stroke="#c6c8ca" stroke-width="3.2" fill="none"/></svg>
<svg style="position:absolute;left:112px;top:1413px;overflow:visible;" width="28" height="28" viewBox="0 0 28 28"><rect x="6" y="0" width="16" height="5" fill="#c6c8ca"/><rect x="0" y="7" width="28" height="12" rx="2" fill="#c6c8ca"/><rect x="6" y="15" width="16" height="12" fill="#3c3f41" stroke="#c6c8ca" stroke-width="2.6"/><circle cx="23" cy="11" r="1.5" fill="#3c3f41"/></svg>
<svg style="position:absolute;left:116px;top:1462px;overflow:visible;" width="20" height="29" viewBox="0 0 20 29"><rect x="7" y="0" width="6" height="3" fill="#c6c8ca"/><rect x="0" y="3" width="20" height="4" fill="#c6c8ca"/><path d="M2 9 H18 L17 28 H3 Z" fill="#c6c8ca"/></svg>
<div style="position:absolute;left:178px;top:1241.61px;font-family:'Liberation Mono', monospace;font-size:30px;line-height:30px;color:#c4c4c4;font-weight:400;white-space:pre;transform:scaleX(0.8667);transform-origin:0 0">12/21 17:11:07: Launching com.atomicservice.6917560469416184154</div>
<div style="position:absolute;left:2711px;top:1521.75px;font-family:'Liberation Sans', sans-serif;font-size:57px;line-height:57px;color:rgba(205,205,205,0.92);white-space:pre;transform:scaleX(0.93);transform-origin:0 0">CSDN @K.P</div>
<div style="position:absolute;left:2752px;top:1537.35px;font-family:'Liberation Sans', sans-serif;font-size:24.4px;line-height:24.4px;color:#f2f2f2;white-space:pre;text-shadow:0 0 2px rgba(0,0,0,0.9),0 0 1px rgba(0,0,0,0.9)">掘金技术社区 @ K_P</div>
</body></html>
